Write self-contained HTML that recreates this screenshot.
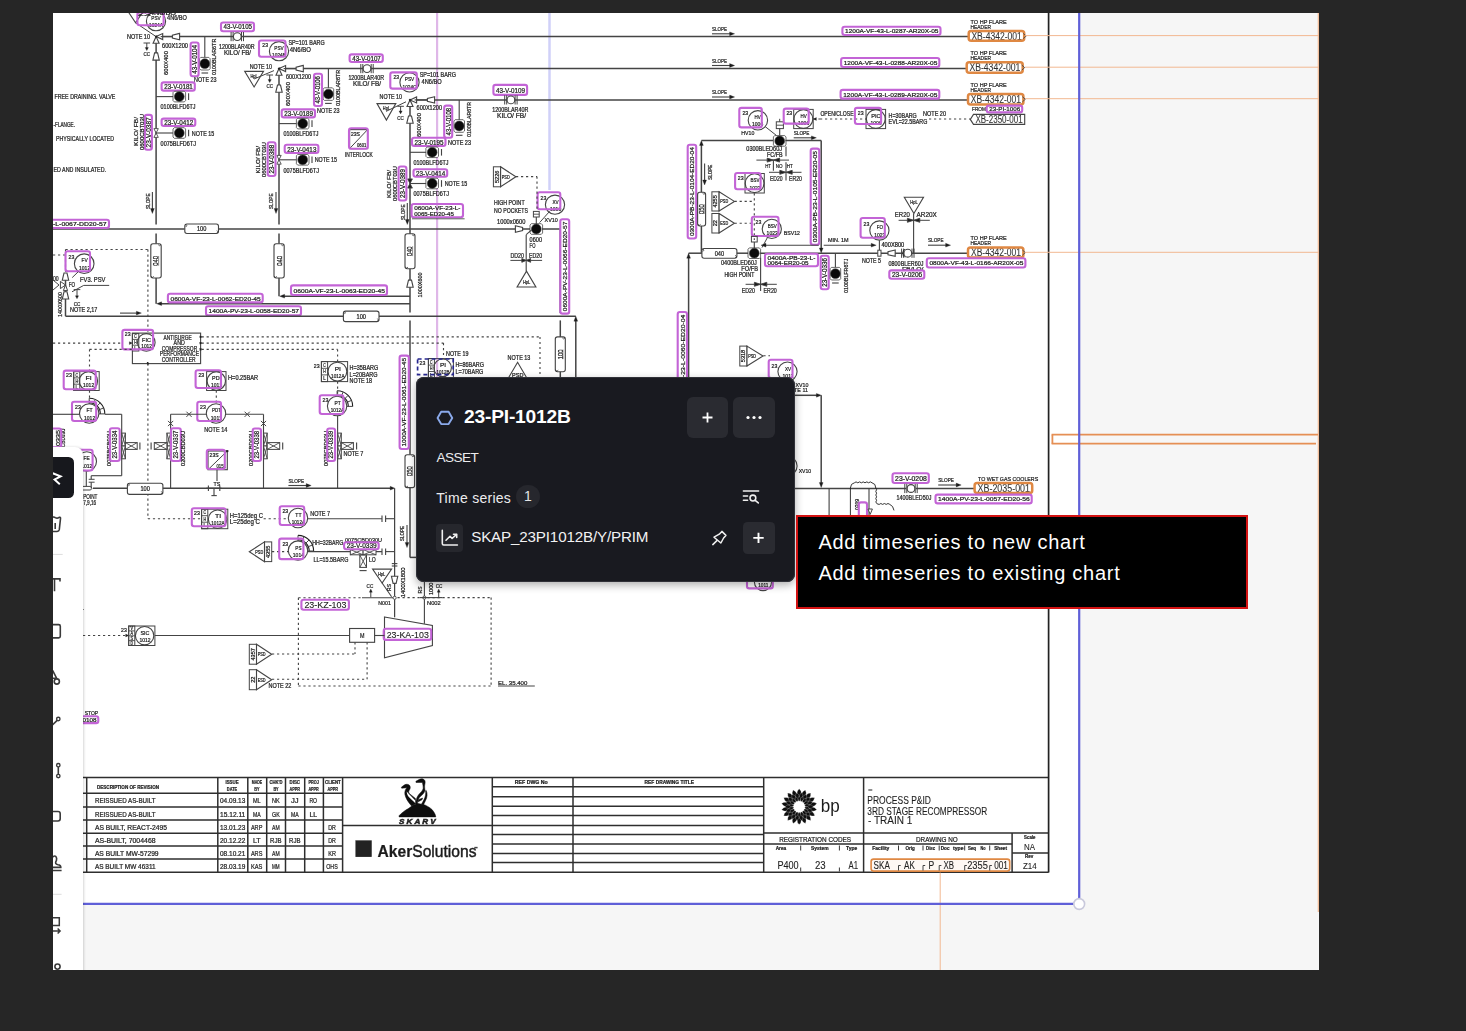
<!DOCTYPE html>
<html lang="en">
<head>
<meta charset="utf-8">
<title>P&amp;ID canvas – 23-PI-1012B</title>
<style>
html,body{margin:0;padding:0;}
body{width:1466px;height:1031px;background:#262626;overflow:hidden;position:relative;font-family:"Liberation Sans",sans-serif;}
#canvas{position:absolute;left:53px;top:13px;width:1266px;height:957px;background:#f6f6f6;overflow:hidden;}
#sheet{position:absolute;left:0;top:0;width:1026px;height:891px;background:#fff;}
#dia{position:absolute;left:-53px;top:-13px;width:1466px;height:1031px;filter:blur(.35px);}
#dia text{font-family:"Liberation Sans",sans-serif;stroke:#1e1e1e;stroke-width:.24px;}
#toolbar{position:absolute;left:0;top:433.8px;width:29.6px;height:530px;background:#fff;border-top-right-radius:8px;box-shadow:1px 0 2.5px rgba(0,0,0,.16);}
#toolsel{position:absolute;left:0;top:444px;width:20.8px;height:41px;background:#17181d;border-radius:0 5.5px 5.5px 0;}
#pop{position:absolute;left:416px;top:377px;width:378.5px;height:204.5px;box-sizing:border-box;background:#191a20;border-radius:8px;box-shadow:0 3px 9px rgba(0,0,0,.32),inset 0 0 0 1px #303138;color:#fff;}
#pop .ttl{position:absolute;left:48px;top:28.25px;font-size:19.2px;line-height:24px;font-weight:bold;letter-spacing:-0.19px;white-space:nowrap;}
#pop .btn{position:absolute;background:#2a2b31;border-radius:6px;}
#pop .asset{position:absolute;left:20.5px;top:72.6px;font-size:13.6px;line-height:16px;letter-spacing:-0.55px;color:#ececee;white-space:nowrap;}
#pop .ts{position:absolute;left:20.3px;top:111.6px;font-size:14px;line-height:18px;letter-spacing:0.27px;color:#ececee;white-space:nowrap;}
#pop .badge{position:absolute;left:100.3px;top:108.4px;width:23.4px;height:23px;border-radius:11.7px;background:#26272d;font-size:14px;line-height:23px;text-align:center;color:#e4e4e6;}
#pop .ico{position:absolute;left:20px;top:147px;width:27.3px;height:28px;border-radius:4px;background:#26272d;}
#pop .tsn{position:absolute;left:55.2px;top:150.1px;font-size:15.2px;line-height:20px;letter-spacing:-0.17px;color:#f2f2f3;white-space:nowrap;}
#menu{position:absolute;left:796px;top:515px;width:448px;height:90px;background:#000;border:2px solid #d31212;color:#fff;}
#menu div{position:absolute;left:20.4px;font-size:20px;line-height:24px;letter-spacing:0.76px;white-space:nowrap;}
</style>
</head>
<body>
<div id="canvas">
  <div id="sheet"></div>
  <svg id="dia" viewBox="0 0 1466 1031" width="1466" height="1031">
<line x1="437.1" y1="13" x2="437.1" y2="378" stroke="#dfb7e8" stroke-width="2.2"/>
<line x1="549.5" y1="13" x2="549.5" y2="190" stroke="#d0d1f8" stroke-width="2.5"/>
<line x1="156.1" y1="36.6" x2="968" y2="36.6" stroke="#444444" stroke-width="1.5"/>
<line x1="279" y1="68.6" x2="966" y2="68.6" stroke="#444444" stroke-width="1.5"/>
<line x1="410" y1="99.9" x2="967.3" y2="99.9" stroke="#444444" stroke-width="1.5"/>
<text x="712" y="30.9" font-size="6.14" textLength="15" lengthAdjust="spacingAndGlyphs" fill="#1e1e1e">SLOPE</text>
<line x1="712" y1="33.8" x2="731.6" y2="33.8" stroke="#444444" stroke-width="1.12"/>
<polygon points="734.6,33.8 729.6,31.9 729.6,35.7" fill="#1e1e1e" stroke="#1e1e1e" stroke-width="0.3" stroke-linejoin="miter"/>
<text x="712" y="62.9" font-size="6.14" textLength="15" lengthAdjust="spacingAndGlyphs" fill="#1e1e1e">SLOPE</text>
<line x1="712" y1="65.5" x2="731.6" y2="65.5" stroke="#444444" stroke-width="1.12"/>
<polygon points="734.6,65.5 729.6,63.6 729.6,67.4" fill="#1e1e1e" stroke="#1e1e1e" stroke-width="0.3" stroke-linejoin="miter"/>
<text x="712" y="94.2" font-size="6.14" textLength="15" lengthAdjust="spacingAndGlyphs" fill="#1e1e1e">SLOPE</text>
<line x1="712" y1="97" x2="731.6" y2="97" stroke="#444444" stroke-width="1.12"/>
<polygon points="734.6,97 729.6,95.1 729.6,98.9" fill="#1e1e1e" stroke="#1e1e1e" stroke-width="0.3" stroke-linejoin="miter"/>
<text x="845" y="33.3" font-size="6.14" textLength="93.5" lengthAdjust="spacingAndGlyphs" fill="#1e1e1e">1200A-VF-43-L-0287-AR20X-05</text>
<rect x="842.4" y="26.7" width="98.1" height="8.3" rx="2.2" fill="none" stroke="#c364d6" stroke-width="2.1"/>
<text x="843.7" y="64.9" font-size="6.14" textLength="93.6" lengthAdjust="spacingAndGlyphs" fill="#1e1e1e">1200A-VF-43-L-0288-AR20X-05</text>
<rect x="841.1" y="58" width="98.2" height="9" rx="2.2" fill="none" stroke="#c364d6" stroke-width="2.1"/>
<text x="843.2" y="96.7" font-size="6.14" textLength="94.1" lengthAdjust="spacingAndGlyphs" fill="#1e1e1e">1200A-VF-43-L-0289-AR20X-05</text>
<rect x="840.6" y="89.9" width="98.7" height="8.7" rx="2.2" fill="none" stroke="#c364d6" stroke-width="2.1"/>
<text x="970.5" y="23.9" font-size="6.14" textLength="36.2" lengthAdjust="spacingAndGlyphs" fill="#1e1e1e">TO  HP  FLARE</text>
<text x="970.5" y="29.2" font-size="6.14" textLength="20.5" lengthAdjust="spacingAndGlyphs" fill="#1e1e1e">HEADER</text>
<text x="971.4" y="39.8" font-size="10" textLength="50.4" lengthAdjust="spacingAndGlyphs" fill="#3a3a3a" style="stroke-width:.1px">XB-4342-001</text>
<rect x="968.7" y="31" width="55.5" height="9.7" rx="2.5" fill="#e8894a" fill-opacity="0.0" stroke="#df8843" stroke-width="2.5"/>
<polyline points="1023.2,33.4 1026.2,36 1023.2,38.6" fill="none" stroke="#444444" stroke-width="0.88" stroke-linejoin="miter"/>
<text x="970.5" y="55.4" font-size="6.14" textLength="36.2" lengthAdjust="spacingAndGlyphs" fill="#1e1e1e">TO  HP  FLARE</text>
<text x="970.5" y="60.4" font-size="6.14" textLength="20.5" lengthAdjust="spacingAndGlyphs" fill="#1e1e1e">HEADER</text>
<text x="969.4" y="71.4" font-size="10" textLength="50.9" lengthAdjust="spacingAndGlyphs" fill="#3a3a3a" style="stroke-width:.1px">XB-4342-001</text>
<rect x="966.7" y="62.3" width="56" height="10.4" rx="2.5" fill="#e8894a" fill-opacity="0.0" stroke="#df8843" stroke-width="2.5"/>
<polyline points="1021.7,65 1024.7,67.6 1021.7,70.2" fill="none" stroke="#444444" stroke-width="0.88" stroke-linejoin="miter"/>
<text x="970.5" y="87.1" font-size="6.14" textLength="36.2" lengthAdjust="spacingAndGlyphs" fill="#1e1e1e">TO  HP  FLARE</text>
<text x="970.5" y="92.1" font-size="6.14" textLength="20.5" lengthAdjust="spacingAndGlyphs" fill="#1e1e1e">HEADER</text>
<text x="970.7" y="103" font-size="10" textLength="50.3" lengthAdjust="spacingAndGlyphs" fill="#3a3a3a" style="stroke-width:.1px">XB-4342-001</text>
<rect x="968" y="93.9" width="55.4" height="10.5" rx="2.5" fill="#e8894a" fill-opacity="0.0" stroke="#df8843" stroke-width="2.5"/>
<polyline points="1022.4,96.7 1025.4,99.2 1022.4,101.8" fill="none" stroke="#444444" stroke-width="0.88" stroke-linejoin="miter"/>
<line x1="156.1" y1="36.6" x2="156.1" y2="224.4" stroke="#444444" stroke-width="1.5"/>
<line x1="156.1" y1="233.6" x2="156.1" y2="243.7" stroke="#444444" stroke-width="1.5"/>
<polyline points="122.4,3 135.6,22.8 148.8,3" fill="none" stroke="#444444" stroke-width="1.12" stroke-linejoin="miter"/>
<line x1="135.6" y1="22.8" x2="156.1" y2="36.6" stroke="#444444" stroke-width="1.0"/>
<circle cx="156" cy="21.2" r="9.6" fill="none" stroke="#444444" stroke-width="1.12"/>
<text x="151.3" y="20.2" font-size="6.14" textLength="9.4" lengthAdjust="spacingAndGlyphs" fill="#1e1e1e">PSV</text>
<text x="149" y="27.1" font-size="5.9" textLength="14" lengthAdjust="spacingAndGlyphs" fill="#1e1e1e">1024A</text>
<text x="137" y="16.4" font-size="5.9" textLength="14" lengthAdjust="spacingAndGlyphs" fill="#1e1e1e">23</text>
<rect x="137.4" y="12.4" width="26.2" height="12.8" rx="2.2" fill="none" stroke="#c364d6" stroke-width="2.1"/>
<text x="167" y="19.9" font-size="6.37" textLength="20" lengthAdjust="spacingAndGlyphs" fill="#1e1e1e">4N6/BO</text>
<text x="150" y="14.6" font-size="5.43" textLength="26" lengthAdjust="spacingAndGlyphs" fill="#1e1e1e">4N6/BO</text>
<text x="127" y="39" font-size="6.37" textLength="23" lengthAdjust="spacingAndGlyphs" fill="#1e1e1e">NOTE  10</text>
<polygon points="156.1,36.6 153.1,43.2 159.1,43.2" fill="#fff" stroke="#444444" stroke-width="1.12" stroke-linejoin="miter"/>
<polygon points="156.1,36.6 162.7,33.6 162.7,39.6" fill="#fff" stroke="#444444" stroke-width="1.12" stroke-linejoin="miter"/>
<circle cx="156.1" cy="36.6" r="0.9" fill="#1e1e1e" stroke="#1e1e1e" stroke-width="0.2"/>
<line x1="160.7" y1="36.6" x2="172.6" y2="36.6" stroke="#444444" stroke-width="1.12"/>
<polygon points="179.6,33.4 172.4,35.1 172.4,38.1 179.6,39.8" fill="#fff" stroke="#444444" stroke-width="1.12" stroke-linejoin="miter"/>
<line x1="143.5" y1="43" x2="150.1" y2="43" stroke="#444444" stroke-width="1.0"/>
<line x1="146.8" y1="43" x2="146.8" y2="48.6" stroke="#444444" stroke-width="1.0"/>
<polygon points="146.8,50.6 145.2,47.6 148.4,47.6" fill="#1e1e1e" stroke="#1e1e1e" stroke-width="0.3" stroke-linejoin="miter"/>
<text x="143.5" y="56.3" font-size="5.9" textLength="6.6" lengthAdjust="spacingAndGlyphs" fill="#1e1e1e">CC</text>
<polygon points="152.9,60.1 154.6,52.9 157.6,52.9 159.3,60.1" fill="#fff" stroke="#444444" stroke-width="1.12" stroke-linejoin="miter"/>
<text x="162" y="48" font-size="6.37" textLength="26" lengthAdjust="spacingAndGlyphs" fill="#1e1e1e">600X1200</text>
<text transform="translate(167.8 75) rotate(-90)" x="0" y="0" font-size="6.14" textLength="24" lengthAdjust="spacingAndGlyphs" fill="#1e1e1e">600X400</text>
<line x1="204.8" y1="36.6" x2="204.8" y2="57.6" stroke="#444444" stroke-width="1.12"/>
<polygon points="200.8,57.4 208.8,57.4 210.1,58.7 210.1,68.7 208.8,70 200.8,70 199.5,68.7 199.5,58.7" fill="#fff" stroke="#3a3a3a" stroke-width="0.75" stroke-linejoin="miter"/>
<circle cx="204.8" cy="63.7" r="4.9" fill="#0a0a0a" stroke="#444444" stroke-width="0.62"/>
<line x1="201.5" y1="73" x2="208.1" y2="73" stroke="#444444" stroke-width="1.12"/>
<text transform="translate(196.9 73.8) rotate(-90)" x="0" y="0" font-size="6.37" textLength="28.9" lengthAdjust="spacingAndGlyphs" fill="#1e1e1e">43-V-0104</text>
<rect x="190.6" y="42.5" width="8" height="33.7" rx="2.2" fill="none" stroke="#c364d6" stroke-width="2.1"/>
<text transform="translate(216 75) rotate(-90)" x="0" y="0" font-size="6.14" textLength="36.3" lengthAdjust="spacingAndGlyphs" fill="#1e1e1e">0100BLAR6TR</text>
<text x="194" y="82.3" font-size="6.37" textLength="22.5" lengthAdjust="spacingAndGlyphs" fill="#1e1e1e">NOTE  23</text>
<text x="223.6" y="29.4" font-size="6.61" textLength="28.4" lengthAdjust="spacingAndGlyphs" fill="#1e1e1e">43-V-0105</text>
<rect x="221" y="22.5" width="33" height="8.7" rx="2.2" fill="none" stroke="#c364d6" stroke-width="2.1"/>
<circle cx="237.3" cy="36.6" r="3.9" fill="#fff" stroke="#444444" stroke-width="1.12"/>
<line x1="231.1" y1="32" x2="231.1" y2="41.2" stroke="#444444" stroke-width="1.0"/>
<line x1="233.1" y1="32" x2="233.1" y2="41.2" stroke="#444444" stroke-width="1.0"/>
<line x1="241.5" y1="32" x2="241.5" y2="41.2" stroke="#444444" stroke-width="1.0"/>
<line x1="243.5" y1="32" x2="243.5" y2="41.2" stroke="#444444" stroke-width="1.0"/>
<text x="219" y="49" font-size="6.37" textLength="35.7" lengthAdjust="spacingAndGlyphs" fill="#1e1e1e">1200BLAR40R</text>
<text x="224" y="54.5" font-size="6.37" textLength="27" lengthAdjust="spacingAndGlyphs" fill="#1e1e1e">KILO/  FB/</text>
<text x="164.2" y="89.1" font-size="6.61" textLength="28.6" lengthAdjust="spacingAndGlyphs" fill="#1e1e1e">23-V-0181</text>
<rect x="161.6" y="82.4" width="33.2" height="8.2" rx="2.2" fill="none" stroke="#c364d6" stroke-width="2.1"/>
<line x1="156.1" y1="96.6" x2="173.4" y2="96.6" stroke="#444444" stroke-width="1.12"/>
<polygon points="173,92.6 174.3,91.3 184.3,91.3 185.6,92.6 185.6,100.6 184.3,101.9 174.3,101.9 173,100.6" fill="#fff" stroke="#3a3a3a" stroke-width="0.75" stroke-linejoin="miter"/>
<circle cx="179.3" cy="96.6" r="4.9" fill="#0a0a0a" stroke="#444444" stroke-width="0.62"/>
<line x1="188.6" y1="93.3" x2="188.6" y2="99.9" stroke="#444444" stroke-width="1.12"/>
<text x="160.6" y="109.2" font-size="6.37" textLength="35" lengthAdjust="spacingAndGlyphs" fill="#1e1e1e">0100BLFD6TJ</text>
<text x="164.2" y="124.9" font-size="6.61" textLength="29.1" lengthAdjust="spacingAndGlyphs" fill="#1e1e1e">23-V-0412</text>
<rect x="161.6" y="118.6" width="33.7" height="7.4" rx="2.2" fill="none" stroke="#c364d6" stroke-width="2.1"/>
<line x1="156.1" y1="133" x2="173.4" y2="133" stroke="#444444" stroke-width="1.12"/>
<polygon points="173,129 174.3,127.7 184.3,127.7 185.6,129 185.6,137 184.3,138.3 174.3,138.3 173,137" fill="#fff" stroke="#3a3a3a" stroke-width="0.75" stroke-linejoin="miter"/>
<circle cx="179.3" cy="133" r="4.9" fill="#0a0a0a" stroke="#444444" stroke-width="0.62"/>
<line x1="188.6" y1="129.7" x2="188.6" y2="136.3" stroke="#444444" stroke-width="1.12"/>
<text x="191.8" y="136.3" font-size="6.37" textLength="22.5" lengthAdjust="spacingAndGlyphs" fill="#1e1e1e">NOTE  15</text>
<text x="160.6" y="145.9" font-size="6.37" textLength="35.4" lengthAdjust="spacingAndGlyphs" fill="#1e1e1e">0075BLFD6TJ</text>
<polygon points="156.1,133 153.9,128.6 158.3,128.6" fill="#fff" stroke="#444444" stroke-width="0.88" stroke-linejoin="miter"/>
<polygon points="156.1,133 153.9,137.4 158.3,137.4" fill="#fff" stroke="#444444" stroke-width="0.88" stroke-linejoin="miter"/>
<text transform="translate(150.7 147.4) rotate(-90)" x="0" y="0" font-size="6.37" textLength="30.1" lengthAdjust="spacingAndGlyphs" fill="#1e1e1e">23-V-0387</text>
<rect x="144.9" y="114.9" width="7" height="34.9" rx="2.2" fill="none" stroke="#c364d6" stroke-width="2.1"/>
<text transform="translate(138.2 146) rotate(-90)" x="0" y="0" font-size="6.14" textLength="29" lengthAdjust="spacingAndGlyphs" fill="#1e1e1e">KILO/  FB/</text>
<text transform="translate(144 150) rotate(-90)" x="0" y="0" font-size="5.66" textLength="36" lengthAdjust="spacingAndGlyphs" fill="#1e1e1e">0600CBT03U</text>
<text transform="translate(150.1 209) rotate(-90)" x="0" y="0" font-size="6.14" textLength="15.5" lengthAdjust="spacingAndGlyphs" fill="#1e1e1e">SLOPE</text>
<line x1="152.4" y1="192" x2="152.4" y2="210.5" stroke="#444444" stroke-width="1.12"/>
<polygon points="152.4,213.5 150.5,208.5 154.3,208.5" fill="#1e1e1e" stroke="#1e1e1e" stroke-width="0.3" stroke-linejoin="miter"/>
<line x1="279" y1="68.6" x2="279" y2="224.4" stroke="#444444" stroke-width="1.5"/>
<line x1="279" y1="233.6" x2="279" y2="243.7" stroke="#444444" stroke-width="1.5"/>
<circle cx="279" cy="51.2" r="9.6" fill="none" stroke="#444444" stroke-width="1.12"/>
<text x="274.3" y="50.2" font-size="6.14" textLength="9.4" lengthAdjust="spacingAndGlyphs" fill="#1e1e1e">PSV</text>
<text x="272" y="57.3" font-size="5.9" textLength="14" lengthAdjust="spacingAndGlyphs" fill="#1e1e1e">1024B</text>
<text x="262.3" y="47.2" font-size="6.14" textLength="5.7" lengthAdjust="spacingAndGlyphs" fill="#1e1e1e">23</text>
<rect x="259" y="40.5" width="26.5" height="16.2" rx="2.2" fill="none" stroke="#c364d6" stroke-width="2.1"/>
<text x="288.4" y="45.3" font-size="6.37" textLength="36.3" lengthAdjust="spacingAndGlyphs" fill="#1e1e1e">SP=101  BARG</text>
<text x="289.7" y="51.6" font-size="6.37" textLength="21.3" lengthAdjust="spacingAndGlyphs" fill="#1e1e1e">4N6/BO</text>
<text x="249.7" y="69.3" font-size="6.37" textLength="22.3" lengthAdjust="spacingAndGlyphs" fill="#1e1e1e">NOTE  10</text>
<polygon points="279,68.6 276,75.2 282,75.2" fill="#fff" stroke="#444444" stroke-width="1.12" stroke-linejoin="miter"/>
<polygon points="279,68.6 285.6,65.6 285.6,71.6" fill="#fff" stroke="#444444" stroke-width="1.12" stroke-linejoin="miter"/>
<circle cx="279" cy="68.6" r="0.9" fill="#1e1e1e" stroke="#1e1e1e" stroke-width="0.2"/>
<line x1="283.6" y1="68.6" x2="296.4" y2="68.6" stroke="#444444" stroke-width="1.12"/>
<polygon points="303.3,65.4 296.1,67.1 296.1,70.1 303.3,71.8" fill="#fff" stroke="#444444" stroke-width="1.12" stroke-linejoin="miter"/>
<polygon points="244.7,71.4 263.5,71.4 254.1,87" fill="#fff" stroke="#444444" stroke-width="1.12" stroke-linejoin="miter"/>
<text x="250.5" y="77.9" font-size="5.19" textLength="7.3" lengthAdjust="spacingAndGlyphs" fill="#1e1e1e">HpL</text>
<line x1="254" y1="79" x2="274" y2="70.6" stroke="#444444" stroke-width="1.0"/>
<line x1="266.4" y1="75" x2="273" y2="75" stroke="#444444" stroke-width="1.0"/>
<line x1="269.7" y1="75" x2="269.7" y2="80.6" stroke="#444444" stroke-width="1.0"/>
<polygon points="269.7,82.6 268.1,79.6 271.3,79.6" fill="#1e1e1e" stroke="#1e1e1e" stroke-width="0.3" stroke-linejoin="miter"/>
<text x="266.4" y="88.3" font-size="5.9" textLength="6.6" lengthAdjust="spacingAndGlyphs" fill="#1e1e1e">CC</text>
<polygon points="275.8,92.2 277.5,85 280.5,85 282.2,92.2" fill="#fff" stroke="#444444" stroke-width="1.12" stroke-linejoin="miter"/>
<text x="286" y="79.3" font-size="6.37" textLength="25" lengthAdjust="spacingAndGlyphs" fill="#1e1e1e">600X1200</text>
<text transform="translate(290.2 106) rotate(-90)" x="0" y="0" font-size="6.14" textLength="24" lengthAdjust="spacingAndGlyphs" fill="#1e1e1e">600X400</text>
<line x1="328.4" y1="68.6" x2="328.4" y2="88" stroke="#444444" stroke-width="1.12"/>
<polygon points="324.4,87.8 332.4,87.8 333.7,89.1 333.7,99.1 332.4,100.4 324.4,100.4 323.1,99.1 323.1,89.1" fill="#fff" stroke="#3a3a3a" stroke-width="0.75" stroke-linejoin="miter"/>
<circle cx="328.4" cy="94.1" r="4.9" fill="#0a0a0a" stroke="#444444" stroke-width="0.62"/>
<line x1="325.1" y1="103.4" x2="331.7" y2="103.4" stroke="#444444" stroke-width="1.12"/>
<text transform="translate(320.3 103.6) rotate(-90)" x="0" y="0" font-size="6.37" textLength="27.5" lengthAdjust="spacingAndGlyphs" fill="#1e1e1e">43-V-0106</text>
<rect x="314" y="73.7" width="8" height="32.3" rx="2.2" fill="none" stroke="#c364d6" stroke-width="2.1"/>
<text transform="translate(339.6 106) rotate(-90)" x="0" y="0" font-size="6.14" textLength="36" lengthAdjust="spacingAndGlyphs" fill="#1e1e1e">0100BLAR6TR</text>
<text x="317" y="112.7" font-size="6.37" textLength="22.6" lengthAdjust="spacingAndGlyphs" fill="#1e1e1e">NOTE  23</text>
<text x="352.2" y="60.8" font-size="6.61" textLength="28.6" lengthAdjust="spacingAndGlyphs" fill="#1e1e1e">43-V-0107</text>
<rect x="349.6" y="54.4" width="33.2" height="7.6" rx="2.2" fill="none" stroke="#c364d6" stroke-width="2.1"/>
<circle cx="367" cy="68.6" r="3.9" fill="#fff" stroke="#444444" stroke-width="1.12"/>
<line x1="360.8" y1="64" x2="360.8" y2="73.2" stroke="#444444" stroke-width="1.0"/>
<line x1="362.8" y1="64" x2="362.8" y2="73.2" stroke="#444444" stroke-width="1.0"/>
<line x1="371.2" y1="64" x2="371.2" y2="73.2" stroke="#444444" stroke-width="1.0"/>
<line x1="373.2" y1="64" x2="373.2" y2="73.2" stroke="#444444" stroke-width="1.0"/>
<text x="348.4" y="80.3" font-size="6.37" textLength="35.6" lengthAdjust="spacingAndGlyphs" fill="#1e1e1e">1200BLAR40R</text>
<text x="353" y="86.3" font-size="6.37" textLength="28" lengthAdjust="spacingAndGlyphs" fill="#1e1e1e">KILO/  FB/</text>
<text x="284.3" y="116" font-size="6.61" textLength="28.7" lengthAdjust="spacingAndGlyphs" fill="#1e1e1e">23-V-0189</text>
<rect x="281.7" y="109.4" width="33.3" height="8" rx="2.2" fill="none" stroke="#c364d6" stroke-width="2.1"/>
<line x1="279" y1="123.6" x2="296.8" y2="123.6" stroke="#444444" stroke-width="1.12"/>
<polygon points="296.4,119.6 297.7,118.3 307.7,118.3 309,119.6 309,127.6 307.7,128.9 297.7,128.9 296.4,127.6" fill="#fff" stroke="#3a3a3a" stroke-width="0.75" stroke-linejoin="miter"/>
<circle cx="302.7" cy="123.6" r="4.9" fill="#0a0a0a" stroke="#444444" stroke-width="0.62"/>
<line x1="312" y1="120.3" x2="312" y2="126.9" stroke="#444444" stroke-width="1.12"/>
<text x="283.5" y="136.3" font-size="6.37" textLength="34.9" lengthAdjust="spacingAndGlyphs" fill="#1e1e1e">0100BLFD6TJ</text>
<text x="287.3" y="151.5" font-size="6.61" textLength="29.1" lengthAdjust="spacingAndGlyphs" fill="#1e1e1e">23-V-0413</text>
<rect x="284.7" y="144.8" width="33.7" height="8.2" rx="2.2" fill="none" stroke="#c364d6" stroke-width="2.1"/>
<line x1="279" y1="159.8" x2="296.8" y2="159.8" stroke="#444444" stroke-width="1.12"/>
<polygon points="296.4,155.8 297.7,154.5 307.7,154.5 309,155.8 309,163.8 307.7,165.1 297.7,165.1 296.4,163.8" fill="#fff" stroke="#3a3a3a" stroke-width="0.75" stroke-linejoin="miter"/>
<circle cx="302.7" cy="159.8" r="4.9" fill="#0a0a0a" stroke="#444444" stroke-width="0.62"/>
<line x1="312" y1="156.5" x2="312" y2="163.1" stroke="#444444" stroke-width="1.12"/>
<text x="314.7" y="162.1" font-size="6.37" textLength="22.3" lengthAdjust="spacingAndGlyphs" fill="#1e1e1e">NOTE  15</text>
<text x="283.5" y="172.6" font-size="6.37" textLength="35.5" lengthAdjust="spacingAndGlyphs" fill="#1e1e1e">0075BLFD6TJ</text>
<polygon points="279,159.8 276.8,155.4 281.2,155.4" fill="#fff" stroke="#444444" stroke-width="0.88" stroke-linejoin="miter"/>
<polygon points="279,159.8 276.8,164.2 281.2,164.2" fill="#fff" stroke="#444444" stroke-width="0.88" stroke-linejoin="miter"/>
<text transform="translate(273.9 173.6) rotate(-90)" x="0" y="0" font-size="6.37" textLength="28.9" lengthAdjust="spacingAndGlyphs" fill="#1e1e1e">23-V-0388</text>
<rect x="267.7" y="142.3" width="7.8" height="33.7" rx="2.2" fill="none" stroke="#c364d6" stroke-width="2.1"/>
<text transform="translate(259.6 173.5) rotate(-90)" x="0" y="0" font-size="6.14" textLength="27.5" lengthAdjust="spacingAndGlyphs" fill="#1e1e1e">KILO/  FB/</text>
<text transform="translate(266 177) rotate(-90)" x="0" y="0" font-size="5.66" textLength="35" lengthAdjust="spacingAndGlyphs" fill="#1e1e1e">0600CBT03U</text>
<text transform="translate(272.7 209) rotate(-90)" x="0" y="0" font-size="6.14" textLength="15.5" lengthAdjust="spacingAndGlyphs" fill="#1e1e1e">SLOPE</text>
<line x1="276" y1="192" x2="276" y2="210.5" stroke="#444444" stroke-width="1.12"/>
<polygon points="276,213.5 274.1,208.5 277.9,208.5" fill="#1e1e1e" stroke="#1e1e1e" stroke-width="0.3" stroke-linejoin="miter"/>
<rect x="349.6" y="129.6" width="18" height="19" fill="none" stroke="#444444" stroke-width="1.12"/>
<line x1="349.6" y1="148.6" x2="367.6" y2="129.6" stroke="#444444" stroke-width="1.0"/>
<text x="351" y="135.7" font-size="5.9" textLength="9" lengthAdjust="spacingAndGlyphs" fill="#1e1e1e">23S</text>
<text x="357" y="147.4" font-size="5.43" textLength="9.4" lengthAdjust="spacingAndGlyphs" fill="#1e1e1e">0601</text>
<rect x="349" y="128.2" width="18.8" height="20.6" rx="2.2" fill="none" stroke="#c364d6" stroke-width="2.1"/>
<text x="345" y="157.1" font-size="6.37" textLength="27.6" lengthAdjust="spacingAndGlyphs" fill="#1e1e1e">INTERLOCK</text>
<line x1="410" y1="99.9" x2="410" y2="234" stroke="#444444" stroke-width="1.5"/>
<line x1="410" y1="268.5" x2="410" y2="312.6" stroke="#444444" stroke-width="1.5"/>
<circle cx="409.5" cy="82.4" r="9.6" fill="none" stroke="#444444" stroke-width="1.12"/>
<text x="404.8" y="81.4" font-size="6.14" textLength="9.4" lengthAdjust="spacingAndGlyphs" fill="#1e1e1e">PSV</text>
<text x="402.5" y="88.5" font-size="5.9" textLength="14" lengthAdjust="spacingAndGlyphs" fill="#1e1e1e">1024C</text>
<text x="393.4" y="78.8" font-size="6.14" textLength="5.6" lengthAdjust="spacingAndGlyphs" fill="#1e1e1e">23</text>
<rect x="390.3" y="72.4" width="26.5" height="16.2" rx="2.2" fill="none" stroke="#c364d6" stroke-width="2.1"/>
<text x="419.7" y="76.7" font-size="6.37" textLength="36.3" lengthAdjust="spacingAndGlyphs" fill="#1e1e1e">SP=101  BARG</text>
<text x="421.5" y="83.5" font-size="6.37" textLength="20.2" lengthAdjust="spacingAndGlyphs" fill="#1e1e1e">4N6/BO</text>
<text x="379.6" y="98.9" font-size="6.37" textLength="22.4" lengthAdjust="spacingAndGlyphs" fill="#1e1e1e">NOTE  10</text>
<polygon points="410,99.9 407,106.5 413,106.5" fill="#fff" stroke="#444444" stroke-width="1.12" stroke-linejoin="miter"/>
<polygon points="410,99.9 416.6,96.9 416.6,102.9" fill="#fff" stroke="#444444" stroke-width="1.12" stroke-linejoin="miter"/>
<circle cx="410" cy="99.9" r="0.9" fill="#1e1e1e" stroke="#1e1e1e" stroke-width="0.2"/>
<line x1="414.6" y1="99.9" x2="427.6" y2="99.9" stroke="#444444" stroke-width="1.12"/>
<polygon points="434.6,96.7 427.4,98.4 427.4,101.4 434.6,103.1" fill="#fff" stroke="#444444" stroke-width="1.12" stroke-linejoin="miter"/>
<polygon points="377,103.6 395.8,103.6 386.4,120" fill="#fff" stroke="#444444" stroke-width="1.12" stroke-linejoin="miter"/>
<text x="382.8" y="110.4" font-size="5.19" textLength="7.3" lengthAdjust="spacingAndGlyphs" fill="#1e1e1e">HpL</text>
<line x1="386" y1="111.4" x2="406" y2="101.8" stroke="#444444" stroke-width="1.0"/>
<line x1="397.3" y1="106.3" x2="403.9" y2="106.3" stroke="#444444" stroke-width="1.0"/>
<line x1="400.6" y1="106.3" x2="400.6" y2="111.9" stroke="#444444" stroke-width="1.0"/>
<polygon points="400.6,113.9 399,110.9 402.2,110.9" fill="#1e1e1e" stroke="#1e1e1e" stroke-width="0.3" stroke-linejoin="miter"/>
<text x="397.3" y="119.6" font-size="5.9" textLength="6.6" lengthAdjust="spacingAndGlyphs" fill="#1e1e1e">CC</text>
<polygon points="406.8,123.2 408.5,116 411.5,116 413.2,123.2" fill="#fff" stroke="#444444" stroke-width="1.12" stroke-linejoin="miter"/>
<text x="416.6" y="110.3" font-size="6.37" textLength="25.4" lengthAdjust="spacingAndGlyphs" fill="#1e1e1e">600X1200</text>
<text transform="translate(420.8 137) rotate(-90)" x="0" y="0" font-size="6.14" textLength="24" lengthAdjust="spacingAndGlyphs" fill="#1e1e1e">600X400</text>
<line x1="459.2" y1="99.9" x2="459.2" y2="119.9" stroke="#444444" stroke-width="1.12"/>
<polygon points="455.2,119.7 463.2,119.7 464.5,121 464.5,131 463.2,132.3 455.2,132.3 453.9,131 453.9,121" fill="#fff" stroke="#3a3a3a" stroke-width="0.75" stroke-linejoin="miter"/>
<circle cx="459.2" cy="126" r="4.9" fill="#0a0a0a" stroke="#444444" stroke-width="0.62"/>
<line x1="455.9" y1="135.3" x2="462.5" y2="135.3" stroke="#444444" stroke-width="1.12"/>
<text transform="translate(450.5 135.4) rotate(-90)" x="0" y="0" font-size="6.37" textLength="27.4" lengthAdjust="spacingAndGlyphs" fill="#1e1e1e">43-V-0108</text>
<rect x="444.2" y="105.6" width="8" height="32.2" rx="2.2" fill="none" stroke="#c364d6" stroke-width="2.1"/>
<text transform="translate(470.8 137) rotate(-90)" x="0" y="0" font-size="6.14" textLength="35" lengthAdjust="spacingAndGlyphs" fill="#1e1e1e">0100BLAR6TR</text>
<text x="448" y="144.6" font-size="6.37" textLength="23" lengthAdjust="spacingAndGlyphs" fill="#1e1e1e">NOTE  23</text>
<text x="496" y="92.5" font-size="6.61" textLength="29.1" lengthAdjust="spacingAndGlyphs" fill="#1e1e1e">43-V-0109</text>
<rect x="493.4" y="84.9" width="33.7" height="10" rx="2.2" fill="none" stroke="#c364d6" stroke-width="2.1"/>
<circle cx="510.9" cy="99.9" r="3.9" fill="#fff" stroke="#444444" stroke-width="1.12"/>
<line x1="504.7" y1="95.3" x2="504.7" y2="104.5" stroke="#444444" stroke-width="1.0"/>
<line x1="506.7" y1="95.3" x2="506.7" y2="104.5" stroke="#444444" stroke-width="1.0"/>
<line x1="515.1" y1="95.3" x2="515.1" y2="104.5" stroke="#444444" stroke-width="1.0"/>
<line x1="517.1" y1="95.3" x2="517.1" y2="104.5" stroke="#444444" stroke-width="1.0"/>
<text x="492.2" y="111.7" font-size="6.37" textLength="36.2" lengthAdjust="spacingAndGlyphs" fill="#1e1e1e">1200BLAR40R</text>
<text x="497" y="117.7" font-size="6.37" textLength="29" lengthAdjust="spacingAndGlyphs" fill="#1e1e1e">KILO/  FB/</text>
<text x="414.6" y="144.5" font-size="6.61" textLength="28.9" lengthAdjust="spacingAndGlyphs" fill="#1e1e1e">23-V-0195</text>
<rect x="412" y="137.8" width="33.5" height="8.2" rx="2.2" fill="none" stroke="#c364d6" stroke-width="2.1"/>
<line x1="410" y1="152.3" x2="426.3" y2="152.3" stroke="#444444" stroke-width="1.12"/>
<polygon points="425.9,148.3 427.2,147 437.2,147 438.5,148.3 438.5,156.3 437.2,157.6 427.2,157.6 425.9,156.3" fill="#fff" stroke="#3a3a3a" stroke-width="0.75" stroke-linejoin="miter"/>
<circle cx="432.2" cy="152.3" r="4.9" fill="#0a0a0a" stroke="#444444" stroke-width="0.62"/>
<line x1="441.5" y1="149" x2="441.5" y2="155.6" stroke="#444444" stroke-width="1.12"/>
<text x="413.5" y="164.6" font-size="6.37" textLength="35" lengthAdjust="spacingAndGlyphs" fill="#1e1e1e">0100BLFD6TJ</text>
<text x="416.1" y="175.6" font-size="6.61" textLength="29.1" lengthAdjust="spacingAndGlyphs" fill="#1e1e1e">23-V-0414</text>
<rect x="413.5" y="169.3" width="33.7" height="7.5" rx="2.2" fill="none" stroke="#c364d6" stroke-width="2.1"/>
<line x1="410" y1="183.5" x2="426.3" y2="183.5" stroke="#444444" stroke-width="1.12"/>
<polygon points="425.9,179.5 427.2,178.2 437.2,178.2 438.5,179.5 438.5,187.5 437.2,188.8 427.2,188.8 425.9,187.5" fill="#fff" stroke="#3a3a3a" stroke-width="0.75" stroke-linejoin="miter"/>
<circle cx="432.2" cy="183.5" r="4.9" fill="#0a0a0a" stroke="#444444" stroke-width="0.62"/>
<line x1="441.5" y1="180.2" x2="441.5" y2="186.8" stroke="#444444" stroke-width="1.12"/>
<text x="444.7" y="185.8" font-size="6.37" textLength="22.5" lengthAdjust="spacingAndGlyphs" fill="#1e1e1e">NOTE  15</text>
<text x="413.5" y="196.3" font-size="6.37" textLength="35.5" lengthAdjust="spacingAndGlyphs" fill="#1e1e1e">0075BLFD6TJ</text>
<polygon points="410,183.5 407.6,178.9 412.4,178.9" fill="#1e1e1e" stroke="#444444" stroke-width="0.88" stroke-linejoin="miter"/>
<polygon points="410,183.5 407.6,188.1 412.4,188.1" fill="#1e1e1e" stroke="#444444" stroke-width="0.88" stroke-linejoin="miter"/>
<text transform="translate(404.8 198.1) rotate(-90)" x="0" y="0" font-size="6.37" textLength="29.2" lengthAdjust="spacingAndGlyphs" fill="#1e1e1e">23-V-0389</text>
<rect x="398.6" y="166.5" width="7.8" height="34" rx="2.2" fill="none" stroke="#c364d6" stroke-width="2.1"/>
<text transform="translate(390.8 198) rotate(-90)" x="0" y="0" font-size="6.14" textLength="28" lengthAdjust="spacingAndGlyphs" fill="#1e1e1e">KILO/  FB/</text>
<text transform="translate(397 201) rotate(-90)" x="0" y="0" font-size="5.66" textLength="35" lengthAdjust="spacingAndGlyphs" fill="#1e1e1e">0600CBT03U</text>
<text transform="translate(404.6 220) rotate(-90)" x="0" y="0" font-size="6.14" textLength="15.5" lengthAdjust="spacingAndGlyphs" fill="#1e1e1e">SLOPE</text>
<line x1="407.3" y1="203" x2="407.3" y2="221.5" stroke="#444444" stroke-width="1.12"/>
<polygon points="407.3,224.5 405.4,219.5 409.2,219.5" fill="#1e1e1e" stroke="#1e1e1e" stroke-width="0.3" stroke-linejoin="miter"/>
<text x="414.2" y="210.2" font-size="6.14" textLength="46.2" lengthAdjust="spacingAndGlyphs" fill="#1e1e1e">0600A-VF-23-L-</text>
<text x="414.2" y="216" font-size="6.14" textLength="39.6" lengthAdjust="spacingAndGlyphs" fill="#1e1e1e">0065-ED20-45</text>
<rect x="411.6" y="204" width="51.4" height="13.2" rx="2.2" fill="none" stroke="#c364d6" stroke-width="2.1"/>
<line x1="412" y1="218.8" x2="464.6" y2="218.8" stroke="#444444" stroke-width="0.88"/>
<text x="54.5" y="98.9" font-size="6.37" textLength="60.9" lengthAdjust="spacingAndGlyphs" fill="#1e1e1e">FREE  DRAINING.  VALVE</text>
<text x="53.5" y="126.7" font-size="6.37" textLength="21.5" lengthAdjust="spacingAndGlyphs" fill="#1e1e1e">-FLANGE.</text>
<text x="56" y="141.3" font-size="6.37" textLength="58" lengthAdjust="spacingAndGlyphs" fill="#1e1e1e">PHYSICALLY  LOCATED</text>
<text x="53.5" y="172.1" font-size="6.37" textLength="52.5" lengthAdjust="spacingAndGlyphs" fill="#1e1e1e">ED  AND  INSULATED.</text>
<line x1="53" y1="229" x2="184.8" y2="229" stroke="#444444" stroke-width="1.5"/>
<line x1="218.5" y1="229" x2="515.9" y2="229" stroke="#444444" stroke-width="1.5"/>
<text x="53" y="226.3" font-size="6.14" textLength="53.6" lengthAdjust="spacingAndGlyphs" fill="#1e1e1e">-L-0067-DD20-57</text>
<rect x="50" y="219.7" width="59" height="8.3" rx="2.2" fill="none" stroke="#c364d6" stroke-width="2.1"/>
<rect x="184.8" y="224" width="33.7" height="9.5" fill="#fff" stroke="#444444" stroke-width="1.12" rx="2.2"/>
<path d="M185.8 224.4 q2 1.2 0 2.6 M216.9 233.1 q2 -1.2 0 -2.6" fill="none" stroke="#1e1e1e" stroke-width="0.7"/>
<text x="196.9" y="231.1" font-size="6.61" textLength="9.4" lengthAdjust="spacingAndGlyphs" fill="#1e1e1e">100</text>
<polygon points="515.4,225.8 522.6,227.5 522.6,230.5 515.4,232.2" fill="#fff" stroke="#444444" stroke-width="1.12" stroke-linejoin="miter"/>
<line x1="522.2" y1="229" x2="530.6" y2="229" stroke="#444444" stroke-width="1.5"/>
<polygon points="530,225 531.3,223.7 541.3,223.7 542.6,225 542.6,233 541.3,234.3 531.3,234.3 530,233" fill="#fff" stroke="#3a3a3a" stroke-width="0.75" stroke-linejoin="miter"/>
<circle cx="536.3" cy="229" r="4.9" fill="#0a0a0a" stroke="#444444" stroke-width="0.62"/>
<line x1="536.3" y1="217" x2="536.3" y2="224" stroke="#444444" stroke-width="1.12"/>
<rect x="533.4" y="211.4" width="5.8" height="5.6" fill="none" stroke="#444444" stroke-width="1.0"/>
<line x1="533.4" y1="214.2" x2="539.2" y2="214.2" stroke="#444444" stroke-width="0.88"/>
<line x1="539.6" y1="222.6" x2="549.6" y2="211.4" stroke="#444444" stroke-width="1.0"/>
<circle cx="555" cy="204.7" r="9.6" fill="none" stroke="#444444" stroke-width="1.12"/>
<text x="552.5" y="203.6" font-size="6.14" textLength="6.2" lengthAdjust="spacingAndGlyphs" fill="#1e1e1e">XV</text>
<text x="550" y="210.9" font-size="5.9" textLength="11.2" lengthAdjust="spacingAndGlyphs" fill="#1e1e1e">1010</text>
<text x="540.6" y="199.5" font-size="6.14" textLength="5.8" lengthAdjust="spacingAndGlyphs" fill="#1e1e1e">23</text>
<rect x="537.6" y="192.3" width="22.7" height="16.9" rx="2.2" fill="none" stroke="#c364d6" stroke-width="2.1"/>
<text x="544.6" y="221.9" font-size="6.14" textLength="13.2" lengthAdjust="spacingAndGlyphs" fill="#1e1e1e">XV10</text>
<text x="494" y="205.3" font-size="6.37" textLength="30.6" lengthAdjust="spacingAndGlyphs" fill="#1e1e1e">HIGH  POINT</text>
<text x="494" y="213.3" font-size="6.37" textLength="33.9" lengthAdjust="spacingAndGlyphs" fill="#1e1e1e">NO  POCKETS</text>
<text x="497" y="224" font-size="6.37" textLength="28.4" lengthAdjust="spacingAndGlyphs" fill="#1e1e1e">1000x0600</text>
<text x="529.6" y="241.5" font-size="6.37" textLength="12.4" lengthAdjust="spacingAndGlyphs" fill="#1e1e1e">0600</text>
<text x="529.6" y="248.3" font-size="6.37" textLength="5.8" lengthAdjust="spacingAndGlyphs" fill="#1e1e1e">FO</text>
<line x1="542" y1="229" x2="560.3" y2="229" stroke="#444444" stroke-width="1.5"/>
<line x1="560.3" y1="229" x2="560.3" y2="313" stroke="#444444" stroke-width="1.5"/>
<text transform="translate(567 311.2) rotate(-90)" x="0" y="0" font-size="6.14" textLength="89.6" lengthAdjust="spacingAndGlyphs" fill="#1e1e1e">0600A-PV-23-L-0066-ED20-57</text>
<rect x="560.3" y="219.2" width="8.9" height="94.4" rx="2.2" fill="none" stroke="#c364d6" stroke-width="2.1"/>
<line x1="526.2" y1="234.7" x2="526.2" y2="271.2" stroke="#444444" stroke-width="1.12"/>
<line x1="526.2" y1="234.7" x2="531.6" y2="229.8" stroke="#444444" stroke-width="1.12"/>
<text x="510.4" y="258.2" font-size="6.37" textLength="13.5" lengthAdjust="spacingAndGlyphs" fill="#1e1e1e">DD20</text>
<text x="528.9" y="258.2" font-size="6.37" textLength="13.2" lengthAdjust="spacingAndGlyphs" fill="#1e1e1e">ED20</text>
<line x1="510.4" y1="260.4" x2="542.1" y2="260.4" stroke="#444444" stroke-width="1.0"/>
<polygon points="526.2,260.4 521.8,258.5 521.8,262.3" fill="#1e1e1e" stroke="#444444" stroke-width="0.88" stroke-linejoin="miter"/>
<polygon points="526.2,260.4 530.6,258.5 530.6,262.3" fill="#1e1e1e" stroke="#444444" stroke-width="0.88" stroke-linejoin="miter"/>
<polygon points="517.1,287 535.9,287 526.5,271.2" fill="#fff" stroke="#444444" stroke-width="1.12" stroke-linejoin="miter"/>
<text x="522.9" y="284.4" font-size="5.19" textLength="7.3" lengthAdjust="spacingAndGlyphs" fill="#1e1e1e">HpL</text>
<rect x="493.4" y="166.8" width="7.2" height="20" fill="#fff" stroke="#444444" stroke-width="1.0"/>
<polygon points="500.6,166.8 515.9,176.8 500.6,186.8" fill="#fff" stroke="#444444" stroke-width="1.12" stroke-linejoin="miter"/>
<text transform="translate(498.9 183) rotate(-90)" x="0" y="0" font-size="5.19" textLength="12.4" lengthAdjust="spacingAndGlyphs" fill="#1e1e1e">5226</text>
<text x="501.8" y="178.7" font-size="5.19" textLength="7.9" lengthAdjust="spacingAndGlyphs" fill="#1e1e1e">PSD</text>
<line x1="516" y1="176.6" x2="537" y2="176.6" stroke="#444444" stroke-width="1.12" stroke-dasharray="2.2 2.8"/>
<line x1="537" y1="176.6" x2="537" y2="211" stroke="#444444" stroke-width="1.12" stroke-dasharray="2.2 2.8"/>
<line x1="701.4" y1="144.6" x2="701.4" y2="253.2" stroke="#444444" stroke-width="1.5"/>
<polygon points="701.4,140.4 699.5,145.4 703.3,145.4" fill="#1e1e1e" stroke="#1e1e1e" stroke-width="0.3" stroke-linejoin="miter"/>
<line x1="701.4" y1="140.6" x2="773.6" y2="140.6" stroke="#444444" stroke-width="1.5"/>
<text transform="translate(694.2 236.1) rotate(-90)" x="0" y="0" font-size="6.14" textLength="88.9" lengthAdjust="spacingAndGlyphs" fill="#1e1e1e">0300A-PB-23-L-0104-ED20-04</text>
<rect x="687.7" y="144.8" width="8.5" height="93.7" rx="2.2" fill="none" stroke="#c364d6" stroke-width="2.1"/>
<text transform="translate(711.8 179.8) rotate(-90)" x="0" y="0" font-size="6.14" textLength="15" lengthAdjust="spacingAndGlyphs" fill="#1e1e1e">SLOPE</text>
<line x1="704.6" y1="163.6" x2="704.6" y2="182" stroke="#444444" stroke-width="1.12"/>
<polygon points="704.6,185 702.7,180 706.5,180" fill="#1e1e1e" stroke="#1e1e1e" stroke-width="0.3" stroke-linejoin="miter"/>
<rect x="697.6" y="192.3" width="8" height="33.7" fill="#fff" stroke="#444444" stroke-width="1.12" rx="2.2"/>
<path d="M698 224.4 q1.2 2 2.6 0 M705.2 193.3 q-1.2 2 -2.6 0" fill="none" stroke="#1e1e1e" stroke-width="0.7"/>
<text transform="translate(704 214) rotate(-90)" x="0" y="0" font-size="6.61" textLength="9.7" lengthAdjust="spacingAndGlyphs" fill="#1e1e1e">050</text>
<line x1="704.2" y1="204.3" x2="704.2" y2="214" stroke="#444444" stroke-width="0.62"/>
<circle cx="757.9" cy="120.3" r="9.7" fill="none" stroke="#444444" stroke-width="1.12"/>
<text x="754.5" y="118.8" font-size="6.14" textLength="6.2" lengthAdjust="spacingAndGlyphs" fill="#1e1e1e">HV</text>
<text x="752" y="126.1" font-size="5.9" textLength="11.2" lengthAdjust="spacingAndGlyphs" fill="#1e1e1e">1006</text>
<text x="742.4" y="115" font-size="6.14" textLength="5.8" lengthAdjust="spacingAndGlyphs" fill="#1e1e1e">23</text>
<rect x="739.3" y="107.9" width="22.5" height="19.5" rx="2.2" fill="none" stroke="#c364d6" stroke-width="2.1"/>
<text x="741.3" y="135.2" font-size="6.14" textLength="13" lengthAdjust="spacingAndGlyphs" fill="#1e1e1e">HV10</text>
<line x1="765.2" y1="126.6" x2="776.6" y2="135.6" stroke="#444444" stroke-width="1.0"/>
<polygon points="773.4,136.9 774.7,135.6 784.7,135.6 786,136.9 786,144.9 784.7,146.2 774.7,146.2 773.4,144.9" fill="#fff" stroke="#3a3a3a" stroke-width="0.75" stroke-linejoin="miter"/>
<circle cx="779.7" cy="140.9" r="4.9" fill="#0a0a0a" stroke="#444444" stroke-width="0.62"/>
<line x1="779.7" y1="128.6" x2="779.7" y2="135.4" stroke="#444444" stroke-width="1.12"/>
<rect x="776.3" y="121.8" width="7.1" height="6.8" fill="none" stroke="#444444" stroke-width="1.0"/>
<line x1="776.3" y1="125.2" x2="783.4" y2="125.2" stroke="#444444" stroke-width="0.88"/>
<line x1="779.7" y1="118.8" x2="779.7" y2="121.8" stroke="#444444" stroke-width="1.0"/>
<text x="746.3" y="151.1" font-size="6.37" textLength="35.7" lengthAdjust="spacingAndGlyphs" fill="#1e1e1e">0300BLED60J</text>
<rect x="793.7" y="109.4" width="19.5" height="19.2" fill="none" stroke="#444444" stroke-width="1.0"/>
<circle cx="803.4" cy="119" r="9.4" fill="none" stroke="#444444" stroke-width="1.12"/>
<text x="800.5" y="118" font-size="6.14" textLength="6.2" lengthAdjust="spacingAndGlyphs" fill="#1e1e1e">HV</text>
<text x="798" y="125.1" font-size="5.9" textLength="11.2" lengthAdjust="spacingAndGlyphs" fill="#1e1e1e">1006</text>
<text x="786.4" y="115.2" font-size="6.14" textLength="5.8" lengthAdjust="spacingAndGlyphs" fill="#1e1e1e">23</text>
<rect x="783.7" y="108.6" width="25" height="15" rx="2.2" fill="none" stroke="#c364d6" stroke-width="2.1"/>
<line x1="813.4" y1="119" x2="820" y2="119" stroke="#444444" stroke-width="1.12" stroke-dasharray="2.2 2.8"/>
<polygon points="813.4,119 816.4,117.6 816.4,120.4" fill="#1e1e1e" stroke="#1e1e1e" stroke-width="0.3" stroke-linejoin="miter"/>
<text x="820.4" y="115.9" font-size="6.37" textLength="33.2" lengthAdjust="spacingAndGlyphs" fill="#1e1e1e">OPEN/CLOSE</text>
<line x1="820" y1="119" x2="866" y2="119" stroke="#444444" stroke-width="1.12" stroke-dasharray="2.2 2.8"/>
<rect x="866" y="109.4" width="19.6" height="19.2" fill="none" stroke="#444444" stroke-width="1.0"/>
<circle cx="875.8" cy="119" r="9.4" fill="none" stroke="#444444" stroke-width="1.12"/>
<text x="871.3" y="118" font-size="6.14" textLength="9.4" lengthAdjust="spacingAndGlyphs" fill="#1e1e1e">PIC</text>
<text x="870.4" y="125.1" font-size="5.9" textLength="11.2" lengthAdjust="spacingAndGlyphs" fill="#1e1e1e">1006</text>
<text x="857.8" y="115" font-size="6.14" textLength="5.8" lengthAdjust="spacingAndGlyphs" fill="#1e1e1e">23</text>
<rect x="854.9" y="107.9" width="26.2" height="16.1" rx="2.2" fill="none" stroke="#c364d6" stroke-width="2.1"/>
<text x="888.6" y="117.7" font-size="6.37" textLength="28.2" lengthAdjust="spacingAndGlyphs" fill="#1e1e1e">H=30BARG</text>
<text x="888.6" y="123.9" font-size="6.37" textLength="38.7" lengthAdjust="spacingAndGlyphs" fill="#1e1e1e">EVL=22.5BARG</text>
<text x="923" y="115.9" font-size="6.37" textLength="23" lengthAdjust="spacingAndGlyphs" fill="#1e1e1e">NOTE  20</text>
<line x1="929" y1="119" x2="970.5" y2="119" stroke="#444444" stroke-width="1.12" stroke-dasharray="2.2 2.8"/>
<text x="972" y="111.2" font-size="6.14" textLength="14" lengthAdjust="spacingAndGlyphs" fill="#1e1e1e">FROM</text>
<text x="989.3" y="111.4" font-size="6.14" textLength="30.9" lengthAdjust="spacingAndGlyphs" fill="#1e1e1e">23-PI-1006</text>
<rect x="986.7" y="105.6" width="35.5" height="6.8" rx="2.2" fill="none" stroke="#c364d6" stroke-width="2.1"/>
<polygon points="973.5,114.4 1024.7,114.4 1024.7,124.4 973.5,124.4 970.3,119.4" fill="#fff" stroke="#444444" stroke-width="1.12" stroke-linejoin="miter"/>
<text x="975.4" y="123.2" font-size="10" textLength="47.2" lengthAdjust="spacingAndGlyphs" fill="#3a3a3a" style="stroke-width:.1px">XB-2350-001</text>
<text x="793.7" y="134.5" font-size="6.14" textLength="15.7" lengthAdjust="spacingAndGlyphs" fill="#1e1e1e">SLOPE</text>
<line x1="793.7" y1="137.8" x2="813.4" y2="137.8" stroke="#444444" stroke-width="1.12"/>
<polygon points="816.4,137.8 811.4,135.9 811.4,139.7" fill="#1e1e1e" stroke="#1e1e1e" stroke-width="0.3" stroke-linejoin="miter"/>
<line x1="785.4" y1="140.6" x2="821.2" y2="140.6" stroke="#444444" stroke-width="1.5"/>
<line x1="821.2" y1="140.6" x2="821.2" y2="249.4" stroke="#444444" stroke-width="1.5"/>
<polygon points="821.2,253 819.3,248 823.1,248" fill="#1e1e1e" stroke="#1e1e1e" stroke-width="0.3" stroke-linejoin="miter"/>
<text transform="translate(817.2 242.3) rotate(-90)" x="0" y="0" font-size="6.14" textLength="91.3" lengthAdjust="spacingAndGlyphs" fill="#1e1e1e">0300A-PB-23-L-0105-ER20-05</text>
<rect x="810.7" y="148.6" width="8.5" height="96.1" rx="2.2" fill="none" stroke="#c364d6" stroke-width="2.1"/>
<text x="767" y="157.1" font-size="6.37" textLength="15.6" lengthAdjust="spacingAndGlyphs" fill="#1e1e1e">FC/FB</text>
<line x1="756.4" y1="160.1" x2="789" y2="160.1" stroke="#444444" stroke-width="1.0"/>
<polygon points="773.4,160.1 767.2,158.1 767.2,162.1" fill="#1e1e1e" stroke="#444444" stroke-width="0.88" stroke-linejoin="miter"/>
<polygon points="773.4,160.1 779.6,158.1 779.6,162.1" fill="#1e1e1e" stroke="#444444" stroke-width="0.88" stroke-linejoin="miter"/>
<line x1="773.4" y1="160.1" x2="773.4" y2="170.8" stroke="#444444" stroke-width="1.12"/>
<line x1="786" y1="146.6" x2="786" y2="156.3" stroke="#444444" stroke-width="1.12"/>
<line x1="786" y1="162.2" x2="786" y2="180.5" stroke="#444444" stroke-width="1.12"/>
<text x="765.2" y="167.5" font-size="6.14" textLength="5.8" lengthAdjust="spacingAndGlyphs" fill="#1e1e1e">HT</text>
<text x="775.8" y="167.5" font-size="6.14" textLength="6.8" lengthAdjust="spacingAndGlyphs" fill="#1e1e1e">NO</text>
<text x="786.8" y="167.5" font-size="6.14" textLength="6" lengthAdjust="spacingAndGlyphs" fill="#1e1e1e">HT</text>
<line x1="769" y1="172.3" x2="801.5" y2="172.3" stroke="#444444" stroke-width="1.0"/>
<polygon points="786,172.3 779.8,170.3 779.8,174.3" fill="#1e1e1e" stroke="#444444" stroke-width="0.88" stroke-linejoin="miter"/>
<polygon points="786,172.3 792.2,170.3 792.2,174.3" fill="#1e1e1e" stroke="#444444" stroke-width="0.88" stroke-linejoin="miter"/>
<text x="770" y="181" font-size="6.37" textLength="12.6" lengthAdjust="spacingAndGlyphs" fill="#1e1e1e">ED20</text>
<text x="789" y="181" font-size="6.37" textLength="13" lengthAdjust="spacingAndGlyphs" fill="#1e1e1e">ER20</text>
<rect x="745" y="173.5" width="19.3" height="19.5" fill="none" stroke="#444444" stroke-width="1.0"/>
<circle cx="754.6" cy="183.2" r="9.4" fill="none" stroke="#444444" stroke-width="1.12"/>
<text x="750.5" y="182.1" font-size="5.9" textLength="9" lengthAdjust="spacingAndGlyphs" fill="#1e1e1e">BSV</text>
<text x="749.4" y="189.5" font-size="5.9" textLength="11.2" lengthAdjust="spacingAndGlyphs" fill="#1e1e1e">1022</text>
<text x="737.8" y="179.8" font-size="6.14" textLength="5.8" lengthAdjust="spacingAndGlyphs" fill="#1e1e1e">23</text>
<rect x="735.1" y="173" width="25.5" height="16.3" rx="2.2" fill="none" stroke="#c364d6" stroke-width="2.1"/>
<rect x="711.9" y="191.8" width="7.2" height="19.2" fill="#fff" stroke="#444444" stroke-width="1.0"/>
<polygon points="719.1,191.8 734.4,201.4 719.1,211" fill="#fff" stroke="#444444" stroke-width="1.12" stroke-linejoin="miter"/>
<text transform="translate(717.4 207.6) rotate(-90)" x="0" y="0" font-size="5.19" textLength="12.4" lengthAdjust="spacingAndGlyphs" fill="#1e1e1e">4255</text>
<text x="720.3" y="203.3" font-size="5.19" textLength="7.9" lengthAdjust="spacingAndGlyphs" fill="#1e1e1e">PSD</text>
<line x1="734.6" y1="201.4" x2="754.3" y2="201.4" stroke="#444444" stroke-width="1.12" stroke-dasharray="2.2 2.8"/>
<rect x="711.9" y="213.5" width="7.2" height="19.5" fill="#fff" stroke="#444444" stroke-width="1.0"/>
<polygon points="719.1,213.5 734.4,223.2 719.1,233" fill="#fff" stroke="#444444" stroke-width="1.12" stroke-linejoin="miter"/>
<text transform="translate(717.4 226.3) rotate(-90)" x="0" y="0" font-size="5.19" textLength="6.2" lengthAdjust="spacingAndGlyphs" fill="#1e1e1e">22</text>
<text x="720.3" y="225.1" font-size="5.19" textLength="7.9" lengthAdjust="spacingAndGlyphs" fill="#1e1e1e">ESD</text>
<line x1="734.6" y1="223.2" x2="754.3" y2="223.2" stroke="#444444" stroke-width="1.12" stroke-dasharray="2.2 2.8"/>
<line x1="754.3" y1="193.2" x2="754.3" y2="240" stroke="#444444" stroke-width="1.12" stroke-dasharray="2.2 2.8"/>
<circle cx="771.8" cy="228.9" r="9.6" fill="none" stroke="#444444" stroke-width="1.12"/>
<text x="767.7" y="227.7" font-size="5.9" textLength="9" lengthAdjust="spacingAndGlyphs" fill="#1e1e1e">BSV</text>
<text x="766.6" y="235.1" font-size="5.9" textLength="11.2" lengthAdjust="spacingAndGlyphs" fill="#1e1e1e">1023</text>
<text x="755.6" y="223.8" font-size="6.14" textLength="5.8" lengthAdjust="spacingAndGlyphs" fill="#1e1e1e">23</text>
<rect x="751.8" y="216.7" width="26.7" height="19.3" rx="2.2" fill="none" stroke="#c364d6" stroke-width="2.1"/>
<text x="783.7" y="234.9" font-size="6.14" textLength="16.3" lengthAdjust="spacingAndGlyphs" fill="#1e1e1e">BSV12</text>
<rect x="751.4" y="236.4" width="5.8" height="5.6" fill="none" stroke="#444444" stroke-width="1.0"/>
<line x1="754.3" y1="242" x2="754.3" y2="248.4" stroke="#444444" stroke-width="1.12"/>
<line x1="762" y1="247.6" x2="767.4" y2="237.6" stroke="#444444" stroke-width="1.0"/>
<line x1="688.6" y1="253.2" x2="701.9" y2="253.2" stroke="#444444" stroke-width="1.5"/>
<rect x="701.9" y="248.5" width="35" height="9.7" fill="#fff" stroke="#444444" stroke-width="1.12" rx="2.2"/>
<path d="M702.9 248.9 q2 1.2 0 2.6 M735.3 257.8 q2 -1.2 0 -2.6" fill="none" stroke="#1e1e1e" stroke-width="0.7"/>
<text x="714.7" y="255.7" font-size="6.61" textLength="9.4" lengthAdjust="spacingAndGlyphs" fill="#1e1e1e">040</text>
<line x1="736.9" y1="253.2" x2="748.6" y2="253.2" stroke="#444444" stroke-width="1.5"/>
<polygon points="748,249.2 749.3,247.9 759.3,247.9 760.6,249.2 760.6,257.2 759.3,258.5 749.3,258.5 748,257.2" fill="#fff" stroke="#3a3a3a" stroke-width="0.75" stroke-linejoin="miter"/>
<circle cx="754.3" cy="253.2" r="4.9" fill="#0a0a0a" stroke="#444444" stroke-width="0.62"/>
<line x1="760.2" y1="253.2" x2="968" y2="253.2" stroke="#444444" stroke-width="1.5"/>
<line x1="688.6" y1="257" x2="688.6" y2="378" stroke="#444444" stroke-width="1.5"/>
<polygon points="688.6,253.2 686.7,258.2 690.5,258.2" fill="#1e1e1e" stroke="#1e1e1e" stroke-width="0.3" stroke-linejoin="miter"/>
<text x="721" y="264.7" font-size="6.37" textLength="35.8" lengthAdjust="spacingAndGlyphs" fill="#1e1e1e">0400BLED60J</text>
<text x="741.3" y="271" font-size="6.37" textLength="16.7" lengthAdjust="spacingAndGlyphs" fill="#1e1e1e">FO/FB</text>
<text x="724.4" y="277.3" font-size="6.37" textLength="29.9" lengthAdjust="spacingAndGlyphs" fill="#1e1e1e">HIGH  POINT</text>
<line x1="760.6" y1="257.6" x2="760.6" y2="291" stroke="#444444" stroke-width="1.12"/>
<line x1="745.6" y1="284.3" x2="776.8" y2="284.3" stroke="#444444" stroke-width="1.0"/>
<polygon points="760.6,284.3 754.4,282.3 754.4,286.3" fill="#1e1e1e" stroke="#444444" stroke-width="0.88" stroke-linejoin="miter"/>
<polygon points="760.6,284.3 766.8,282.3 766.8,286.3" fill="#1e1e1e" stroke="#444444" stroke-width="0.88" stroke-linejoin="miter"/>
<text x="741.8" y="293.2" font-size="6.37" textLength="13.2" lengthAdjust="spacingAndGlyphs" fill="#1e1e1e">ED20</text>
<text x="763.6" y="293.2" font-size="6.37" textLength="13.2" lengthAdjust="spacingAndGlyphs" fill="#1e1e1e">ER20</text>
<line x1="764" y1="245.2" x2="818.7" y2="245.2" stroke="#444444" stroke-width="1.12"/>
<polygon points="761,245.2 766,243.3 766,247.1" fill="#1e1e1e" stroke="#1e1e1e" stroke-width="0.3" stroke-linejoin="miter"/>
<text x="767.6" y="259.7" font-size="6.14" textLength="47.8" lengthAdjust="spacingAndGlyphs" fill="#1e1e1e">0400A-PB-23-L-</text>
<text x="767.6" y="265.2" font-size="6.14" textLength="41" lengthAdjust="spacingAndGlyphs" fill="#1e1e1e">0064-ER20-05</text>
<rect x="765" y="253.7" width="53" height="12.5" rx="2.2" fill="none" stroke="#c364d6" stroke-width="2.1"/>
<text transform="translate(827 286.8) rotate(-90)" x="0" y="0" font-size="6.37" textLength="28.7" lengthAdjust="spacingAndGlyphs" fill="#1e1e1e">23-V-0336</text>
<rect x="820.7" y="255.7" width="8" height="33.5" rx="2.2" fill="none" stroke="#c364d6" stroke-width="2.1"/>
<line x1="835.4" y1="253.2" x2="835.4" y2="267.6" stroke="#444444" stroke-width="1.12"/>
<polygon points="831.4,267.4 839.4,267.4 840.7,268.7 840.7,278.7 839.4,280 831.4,280 830.1,278.7 830.1,268.7" fill="#fff" stroke="#3a3a3a" stroke-width="0.75" stroke-linejoin="miter"/>
<circle cx="835.4" cy="273.7" r="4.9" fill="#0a0a0a" stroke="#444444" stroke-width="0.62"/>
<line x1="832.1" y1="283" x2="838.7" y2="283" stroke="#444444" stroke-width="1.12"/>
<text transform="translate(847.6 293) rotate(-90)" x="0" y="0" font-size="6.14" textLength="34.3" lengthAdjust="spacingAndGlyphs" fill="#1e1e1e">0100BLFR6TJ</text>
<text x="828" y="242.4" font-size="6.14" textLength="20.6" lengthAdjust="spacingAndGlyphs" fill="#1e1e1e">MIN.  1M</text>
<line x1="823.7" y1="245.2" x2="873" y2="245.2" stroke="#444444" stroke-width="1.12"/>
<polygon points="876.2,245.2 871.2,243.3 871.2,247.1" fill="#1e1e1e" stroke="#1e1e1e" stroke-width="0.3" stroke-linejoin="miter"/>
<circle cx="879.4" cy="230.5" r="9.6" fill="none" stroke="#444444" stroke-width="1.12"/>
<text x="876.7" y="229.4" font-size="6.14" textLength="6.2" lengthAdjust="spacingAndGlyphs" fill="#1e1e1e">FO</text>
<text x="874.2" y="236.9" font-size="5.9" textLength="11.2" lengthAdjust="spacingAndGlyphs" fill="#1e1e1e">1023</text>
<text x="863.6" y="225.6" font-size="6.14" textLength="5.8" lengthAdjust="spacingAndGlyphs" fill="#1e1e1e">23</text>
<rect x="860.6" y="218" width="24.2" height="19.7" rx="2.2" fill="none" stroke="#c364d6" stroke-width="2.1"/>
<line x1="879.4" y1="240.2" x2="879.4" y2="250.4" stroke="#444444" stroke-width="1.12"/>
<rect x="877.8" y="250.2" width="3.2" height="6" fill="#fff" stroke="#444444" stroke-width="1.0"/>
<text x="881.4" y="246.5" font-size="6.37" textLength="22.9" lengthAdjust="spacingAndGlyphs" fill="#1e1e1e">400X800</text>
<text x="861.9" y="262.9" font-size="6.37" textLength="19.1" lengthAdjust="spacingAndGlyphs" fill="#1e1e1e">NOTE  5</text>
<polygon points="895.2,250 888,251.7 888,254.7 895.2,256.4" fill="#fff" stroke="#444444" stroke-width="1.12" stroke-linejoin="miter"/>
<circle cx="907.8" cy="253.2" r="3.9" fill="#fff" stroke="#444444" stroke-width="1.12"/>
<line x1="901.6" y1="248.6" x2="901.6" y2="257.8" stroke="#444444" stroke-width="1.0"/>
<line x1="903.6" y1="248.6" x2="903.6" y2="257.8" stroke="#444444" stroke-width="1.0"/>
<line x1="912" y1="248.6" x2="912" y2="257.8" stroke="#444444" stroke-width="1.0"/>
<line x1="914" y1="248.6" x2="914" y2="257.8" stroke="#444444" stroke-width="1.0"/>
<path d="M905 249 a5 5 0 0 0 0 8.4" fill="none" stroke="#1e1e1e" stroke-width="0.8"/>
<text x="888.6" y="265.6" font-size="6.37" textLength="34.9" lengthAdjust="spacingAndGlyphs" fill="#1e1e1e">0800BLER60J</text>
<text x="902" y="270.9" font-size="5.9" textLength="21.4" lengthAdjust="spacingAndGlyphs" fill="#1e1e1e">FB/LO/</text>
<text x="891.9" y="277.1" font-size="6.61" textLength="30.4" lengthAdjust="spacingAndGlyphs" fill="#1e1e1e">23-V-0206</text>
<rect x="889.3" y="270.4" width="35" height="8.3" rx="2.2" fill="none" stroke="#c364d6" stroke-width="2.1"/>
<polygon points="904.3,197.3 923.5,197.3 913.9,213.5" fill="#fff" stroke="#444444" stroke-width="1.12" stroke-linejoin="miter"/>
<text x="910.3" y="204" font-size="5.19" textLength="7.3" lengthAdjust="spacingAndGlyphs" fill="#1e1e1e">HpL</text>
<line x1="913.6" y1="213.5" x2="913.6" y2="253" stroke="#444444" stroke-width="1.12"/>
<text x="894.8" y="217" font-size="7.32" textLength="15" lengthAdjust="spacingAndGlyphs" fill="#1e1e1e">ER20</text>
<text x="916.6" y="217" font-size="7.32" textLength="20.2" lengthAdjust="spacingAndGlyphs" fill="#1e1e1e">AR20X</text>
<line x1="898.6" y1="220.3" x2="929.8" y2="220.3" stroke="#444444" stroke-width="1.0"/>
<polygon points="913.6,220.3 907.4,218.3 907.4,222.3" fill="#1e1e1e" stroke="#444444" stroke-width="0.88" stroke-linejoin="miter"/>
<polygon points="913.6,220.3 919.8,218.3 919.8,222.3" fill="#1e1e1e" stroke="#444444" stroke-width="0.88" stroke-linejoin="miter"/>
<text x="928" y="241.9" font-size="6.14" textLength="15.5" lengthAdjust="spacingAndGlyphs" fill="#1e1e1e">SLOPE</text>
<line x1="928" y1="245.2" x2="947.6" y2="245.2" stroke="#444444" stroke-width="1.12"/>
<polygon points="950.6,245.2 945.6,243.3 945.6,247.1" fill="#1e1e1e" stroke="#1e1e1e" stroke-width="0.3" stroke-linejoin="miter"/>
<text x="970.5" y="239.9" font-size="6.14" textLength="36.2" lengthAdjust="spacingAndGlyphs" fill="#1e1e1e">TO  HP  FLARE</text>
<text x="970.5" y="245.2" font-size="6.14" textLength="20.5" lengthAdjust="spacingAndGlyphs" fill="#1e1e1e">HEADER</text>
<text x="971" y="256.4" font-size="10" textLength="50" lengthAdjust="spacingAndGlyphs" fill="#3a3a3a" style="stroke-width:.1px">XB-4342-001</text>
<rect x="968" y="247.5" width="55.4" height="10" rx="2.5" fill="#e8894a" fill-opacity="0.0" stroke="#df8843" stroke-width="2.5"/>
<polyline points="1022.4,250 1025.4,252.6 1022.4,255.2" fill="none" stroke="#444444" stroke-width="0.88" stroke-linejoin="miter"/>
<text x="929.4" y="265.3" font-size="6.14" textLength="94" lengthAdjust="spacingAndGlyphs" fill="#1e1e1e">0800A-VF-43-L-0166-AR20X-05</text>
<rect x="926.8" y="258.2" width="98.6" height="9.3" rx="2.2" fill="none" stroke="#c364d6" stroke-width="2.1"/>
<rect x="150.8" y="243.7" width="10.4" height="34.3" fill="#fff" stroke="#444444" stroke-width="1.12" rx="2.2"/>
<path d="M151.2 276.4 q1.2 2 2.6 0 M160.8 244.7 q-1.2 2 -2.6 0" fill="none" stroke="#1e1e1e" stroke-width="0.7"/>
<text transform="translate(158.4 265.7) rotate(-90)" x="0" y="0" font-size="6.61" textLength="9.7" lengthAdjust="spacingAndGlyphs" fill="#1e1e1e">040</text>
<line x1="158.6" y1="256" x2="158.6" y2="265.7" stroke="#444444" stroke-width="0.62"/>
<line x1="156.1" y1="278" x2="156.1" y2="303.7" stroke="#444444" stroke-width="1.5"/>
<rect x="274" y="243.7" width="10.2" height="34.3" fill="#fff" stroke="#444444" stroke-width="1.12" rx="2.2"/>
<path d="M274.4 276.4 q1.2 2 2.6 0 M283.8 244.7 q-1.2 2 -2.6 0" fill="none" stroke="#1e1e1e" stroke-width="0.7"/>
<text transform="translate(281.5 265.7) rotate(-90)" x="0" y="0" font-size="6.61" textLength="9.7" lengthAdjust="spacingAndGlyphs" fill="#1e1e1e">040</text>
<line x1="281.7" y1="256" x2="281.7" y2="265.7" stroke="#444444" stroke-width="0.62"/>
<line x1="279" y1="278" x2="279" y2="296.2" stroke="#444444" stroke-width="1.5"/>
<rect x="405" y="233.7" width="10" height="35" fill="#fff" stroke="#444444" stroke-width="1.12" rx="2.2"/>
<path d="M405.4 267.1 q1.2 2 2.6 0 M414.6 234.7 q-1.2 2 -2.6 0" fill="none" stroke="#1e1e1e" stroke-width="0.7"/>
<text transform="translate(412.4 256.1) rotate(-90)" x="0" y="0" font-size="6.61" textLength="9.7" lengthAdjust="spacingAndGlyphs" fill="#1e1e1e">040</text>
<line x1="412.6" y1="246.3" x2="412.6" y2="256.1" stroke="#444444" stroke-width="0.62"/>
<polygon points="406.8,287.3 408.5,280.1 411.5,280.1 413.2,287.3" fill="#fff" stroke="#444444" stroke-width="1.12" stroke-linejoin="miter"/>
<text transform="translate(421.5 297.4) rotate(-90)" x="0" y="0" font-size="5.9" textLength="25" lengthAdjust="spacingAndGlyphs" fill="#1e1e1e">1000X600</text>
<line x1="160" y1="303.7" x2="410" y2="303.7" stroke="#444444" stroke-width="1.5"/>
<polygon points="156.6,303.7 161.6,301.8 161.6,305.6" fill="#1e1e1e" stroke="#1e1e1e" stroke-width="0.3" stroke-linejoin="miter"/>
<line x1="283" y1="296.2" x2="410" y2="296.2" stroke="#444444" stroke-width="1.5"/>
<polygon points="279.6,296.2 284.6,294.3 284.6,298.1" fill="#1e1e1e" stroke="#1e1e1e" stroke-width="0.3" stroke-linejoin="miter"/>
<text x="170.5" y="300.5" font-size="6.14" textLength="90.2" lengthAdjust="spacingAndGlyphs" fill="#1e1e1e">0600A-VF-23-L-0062-ED20-45</text>
<rect x="167.9" y="293.7" width="94.8" height="8.7" rx="2.2" fill="none" stroke="#c364d6" stroke-width="2.1"/>
<text x="293.6" y="292.6" font-size="6.14" textLength="91.4" lengthAdjust="spacingAndGlyphs" fill="#1e1e1e">0600A-VF-23-L-0063-ED20-45</text>
<rect x="291" y="285.4" width="96" height="9.6" rx="2.2" fill="none" stroke="#c364d6" stroke-width="2.1"/>
<text x="208.6" y="313.2" font-size="6.14" textLength="90.4" lengthAdjust="spacingAndGlyphs" fill="#1e1e1e">1400A-PV-23-L-0058-ED20-57</text>
<rect x="206" y="306.2" width="95" height="9.2" rx="2.2" fill="none" stroke="#c364d6" stroke-width="2.1"/>
<line x1="65.5" y1="316.2" x2="343.4" y2="316.2" stroke="#444444" stroke-width="1.5"/>
<rect x="343.4" y="311.1" width="35.6" height="10.5" fill="#fff" stroke="#444444" stroke-width="1.12" rx="2.2"/>
<path d="M344.4 311.5 q2 1.2 0 2.6 M377.4 321.2 q2 -1.2 0 -2.6" fill="none" stroke="#1e1e1e" stroke-width="0.7"/>
<text x="356.5" y="318.7" font-size="6.61" textLength="9.4" lengthAdjust="spacingAndGlyphs" fill="#1e1e1e">100</text>
<line x1="379" y1="316.2" x2="575.8" y2="316.2" stroke="#444444" stroke-width="1.5"/>
<line x1="575.8" y1="320" x2="575.8" y2="378" stroke="#444444" stroke-width="1.5"/>
<polygon points="575.8,316.2 573.9,321.2 577.7,321.2" fill="#1e1e1e" stroke="#1e1e1e" stroke-width="0.3" stroke-linejoin="miter"/>
<line x1="560.3" y1="320.4" x2="560.3" y2="337" stroke="#444444" stroke-width="1.5"/>
<rect x="555.3" y="336.9" width="10" height="34.9" fill="#fff" stroke="#444444" stroke-width="1.12" rx="2.2"/>
<path d="M555.7 370.2 q1.2 2 2.6 0 M564.9 337.9 q-1.2 2 -2.6 0" fill="none" stroke="#1e1e1e" stroke-width="0.7"/>
<text transform="translate(562.7 359.2) rotate(-90)" x="0" y="0" font-size="6.61" textLength="9.7" lengthAdjust="spacingAndGlyphs" fill="#1e1e1e">100</text>
<line x1="562.9" y1="349.5" x2="562.9" y2="359.2" stroke="#444444" stroke-width="0.62"/>
<line x1="560.3" y1="371.8" x2="560.3" y2="378" stroke="#444444" stroke-width="1.5"/>
<line x1="410" y1="320.4" x2="410" y2="454.7" stroke="#444444" stroke-width="1.5"/>
<text transform="translate(406.4 446.6) rotate(-90)" x="0" y="0" font-size="6.14" textLength="88.6" lengthAdjust="spacingAndGlyphs" fill="#1e1e1e">1000A-VF-23-L-0061-ED20-45</text>
<rect x="399.6" y="355.6" width="9.2" height="93.4" rx="2.2" fill="none" stroke="#c364d6" stroke-width="2.1"/>
<rect x="405" y="454.7" width="9.6" height="32.9" fill="#fff" stroke="#444444" stroke-width="1.12" rx="2.2"/>
<path d="M405.4 486 q1.2 2 2.6 0 M414.2 455.7 q-1.2 2 -2.6 0" fill="none" stroke="#1e1e1e" stroke-width="0.7"/>
<text transform="translate(412.2 476) rotate(-90)" x="0" y="0" font-size="6.61" textLength="9.7" lengthAdjust="spacingAndGlyphs" fill="#1e1e1e">050</text>
<line x1="412.4" y1="466.3" x2="412.4" y2="476" stroke="#444444" stroke-width="0.62"/>
<line x1="410" y1="487.6" x2="410" y2="557.4" stroke="#444444" stroke-width="1.5"/>
<line x1="410" y1="557.4" x2="417" y2="557.4" stroke="#444444" stroke-width="1.5"/>
<line x1="65.5" y1="249.5" x2="147.9" y2="249.5" stroke="#444444" stroke-width="1.12" stroke-dasharray="2.2 2.8"/>
<line x1="147.9" y1="249.5" x2="147.9" y2="333" stroke="#444444" stroke-width="1.12" stroke-dasharray="2.2 2.8"/>
<line x1="53" y1="255" x2="65.5" y2="255" stroke="#444444" stroke-width="1.12" stroke-dasharray="2.2 2.8"/>
<line x1="65.5" y1="249.5" x2="65.5" y2="272" stroke="#444444" stroke-width="1.12" stroke-dasharray="2.2 2.8"/>
<circle cx="84.2" cy="263.7" r="9.8" fill="none" stroke="#444444" stroke-width="1.12"/>
<text x="81.5" y="262.4" font-size="6.14" textLength="6.2" lengthAdjust="spacingAndGlyphs" fill="#1e1e1e">FV</text>
<text x="79" y="270.1" font-size="5.9" textLength="11.2" lengthAdjust="spacingAndGlyphs" fill="#1e1e1e">1012</text>
<text x="68.6" y="258.6" font-size="6.14" textLength="5.8" lengthAdjust="spacingAndGlyphs" fill="#1e1e1e">23</text>
<rect x="65.5" y="251.2" width="24.5" height="20" rx="2.2" fill="none" stroke="#c364d6" stroke-width="2.1"/>
<line x1="78.4" y1="271.6" x2="72.2" y2="277.6" stroke="#444444" stroke-width="1.0"/>
<text x="80" y="281.5" font-size="6.37" textLength="25.4" lengthAdjust="spacingAndGlyphs" fill="#1e1e1e">FV3.  PSV</text>
<text x="53" y="280.5" font-size="6.37" textLength="5.7" lengthAdjust="spacingAndGlyphs" fill="#1e1e1e">00</text>
<line x1="65.5" y1="275" x2="65.5" y2="316.2" stroke="#444444" stroke-width="1.5"/>
<polygon points="62.3,280.2 64,273 67,273 68.7,280.2" fill="#fff" stroke="#444444" stroke-width="1.12" stroke-linejoin="miter"/>
<polygon points="65.5,285 60.4,281.4 60.4,288.6" fill="#fff" stroke="#444444" stroke-width="1.0" stroke-linejoin="miter"/>
<polygon points="65.5,285 63.4,290.6 67.6,290.6" fill="#fff" stroke="#444444" stroke-width="1.0" stroke-linejoin="miter"/>
<polyline points="53,280 59,285 53,290" fill="none" stroke="#444444" stroke-width="1.0" stroke-linejoin="miter"/>
<polygon points="62.3,299 64,291.8 67,291.8 68.7,299" fill="#fff" stroke="#444444" stroke-width="1.12" stroke-linejoin="miter"/>
<text x="68.7" y="286.7" font-size="6.37" textLength="6.3" lengthAdjust="spacingAndGlyphs" fill="#1e1e1e">FO</text>
<polyline points="72,291.8 83.7,285.4 109.2,285.4" fill="none" stroke="#444444" stroke-width="1.0" stroke-linejoin="miter"/>
<line x1="73.7" y1="289.6" x2="80.3" y2="289.6" stroke="#444444" stroke-width="1.0"/>
<line x1="77" y1="289.6" x2="77" y2="296.8" stroke="#444444" stroke-width="1.0"/>
<polygon points="77,298.8 75.4,295.8 78.6,295.8" fill="#1e1e1e" stroke="#1e1e1e" stroke-width="0.3" stroke-linejoin="miter"/>
<text x="73.7" y="305.5" font-size="5.9" textLength="6.6" lengthAdjust="spacingAndGlyphs" fill="#1e1e1e">CC</text>
<text x="70" y="312.3" font-size="6.37" textLength="27.4" lengthAdjust="spacingAndGlyphs" fill="#1e1e1e">NOTE  2,17</text>
<text transform="translate(61.7 317) rotate(-90)" x="0" y="0" font-size="5.9" textLength="25" lengthAdjust="spacingAndGlyphs" fill="#1e1e1e">1400X600</text>
<line x1="120" y1="313.1" x2="138" y2="313.1" stroke="#444444" stroke-width="1.12"/>
<polygon points="141.4,313.1 136.4,311.2 136.4,315" fill="#1e1e1e" stroke="#1e1e1e" stroke-width="0.3" stroke-linejoin="miter"/>
<rect x="132.4" y="333.1" width="68.2" height="30.5" fill="none" stroke="#444444" stroke-width="1.12"/>
<rect x="132.4" y="333.6" width="6.4" height="17.4" fill="none" stroke="#444444" stroke-width="1.0"/>
<line x1="132.4" y1="339.4" x2="138.8" y2="339.4" stroke="#444444" stroke-width="0.88"/>
<line x1="132.4" y1="345.2" x2="138.8" y2="345.2" stroke="#444444" stroke-width="0.88"/>
<text x="134.3" y="338.3" font-size="4.96" textLength="2.5" lengthAdjust="spacingAndGlyphs" fill="#1e1e1e">C</text>
<text x="134.3" y="344.1" font-size="4.96" textLength="2.5" lengthAdjust="spacingAndGlyphs" fill="#1e1e1e">H</text>
<text x="134.3" y="349.9" font-size="4.96" textLength="2.5" lengthAdjust="spacingAndGlyphs" fill="#1e1e1e">L</text>
<circle cx="146.3" cy="342.4" r="8.8" fill="none" stroke="#444444" stroke-width="1.12"/>
<text x="142.1" y="341.5" font-size="5.9" textLength="9" lengthAdjust="spacingAndGlyphs" fill="#1e1e1e">FIC</text>
<text x="141.2" y="348.2" font-size="5.66" textLength="10.8" lengthAdjust="spacingAndGlyphs" fill="#1e1e1e">1012</text>
<text x="124.8" y="336" font-size="6.14" textLength="5.8" lengthAdjust="spacingAndGlyphs" fill="#1e1e1e">23</text>
<rect x="122.4" y="329.9" width="30.7" height="19.5" rx="2.2" fill="none" stroke="#c364d6" stroke-width="2.1"/>
<polygon points="132.4,343.1 129.4,341.7 129.4,344.5" fill="#1e1e1e" stroke="#1e1e1e" stroke-width="0.3" stroke-linejoin="miter"/>
<text x="163.6" y="339.8" font-size="6.37" textLength="28.2" lengthAdjust="spacingAndGlyphs" fill="#1e1e1e">ANTISURGE</text>
<text x="173.6" y="345.2" font-size="6.37" textLength="11.2" lengthAdjust="spacingAndGlyphs" fill="#1e1e1e">AND</text>
<text x="161.8" y="350.5" font-size="6.37" textLength="35.4" lengthAdjust="spacingAndGlyphs" fill="#1e1e1e">COMPRESSOR</text>
<text x="159.8" y="356" font-size="6.37" textLength="39.2" lengthAdjust="spacingAndGlyphs" fill="#1e1e1e">PERFORMANCE</text>
<text x="161.8" y="361.5" font-size="6.37" textLength="33.8" lengthAdjust="spacingAndGlyphs" fill="#1e1e1e">CONTROLLER</text>
<rect x="199.8" y="336" width="1.8" height="1.8" fill="#1e1e1e" stroke="#1e1e1e" stroke-width="0.2"/>
<rect x="199.8" y="342.2" width="1.8" height="1.8" fill="#1e1e1e" stroke="#1e1e1e" stroke-width="0.2"/>
<rect x="199.8" y="348.5" width="1.8" height="1.8" fill="#1e1e1e" stroke="#1e1e1e" stroke-width="0.2"/>
<rect x="147" y="362.6" width="1.8" height="2" fill="#1e1e1e" stroke="#1e1e1e" stroke-width="0.2"/>
<line x1="201.6" y1="336.9" x2="540" y2="336.9" stroke="#444444" stroke-width="1.12" stroke-dasharray="2.2 2.8"/>
<line x1="53" y1="343.1" x2="122.4" y2="343.1" stroke="#444444" stroke-width="1.12" stroke-dasharray="2.2 2.8"/>
<line x1="201.6" y1="343.1" x2="443.5" y2="343.1" stroke="#444444" stroke-width="1.12" stroke-dasharray="2.2 2.8"/>
<line x1="89.5" y1="349.4" x2="132.4" y2="349.4" stroke="#444444" stroke-width="1.12" stroke-dasharray="2.2 2.8"/>
<line x1="201.6" y1="349.4" x2="337.6" y2="349.4" stroke="#444444" stroke-width="1.12" stroke-dasharray="2.2 2.8"/>
<line x1="337.6" y1="349.4" x2="337.6" y2="361.6" stroke="#444444" stroke-width="1.12" stroke-dasharray="2.2 2.8"/>
<line x1="89.5" y1="349.4" x2="89.5" y2="371.6" stroke="#444444" stroke-width="1.12" stroke-dasharray="2.2 2.8"/>
<line x1="147.9" y1="363.6" x2="147.9" y2="518.7" stroke="#444444" stroke-width="1.12" stroke-dasharray="2.2 2.8"/>
<line x1="540" y1="336.9" x2="540" y2="378" stroke="#444444" stroke-width="1.12" stroke-dasharray="2.2 2.8"/>
<line x1="443.5" y1="343.1" x2="443.5" y2="355" stroke="#444444" stroke-width="1.12" stroke-dasharray="2.2 2.8"/>
<rect x="73.7" y="371.6" width="25.5" height="18.9" fill="none" stroke="#444444" stroke-width="1.0"/>
<rect x="73.7" y="371.6" width="6.1" height="18.9" fill="none" stroke="#444444" stroke-width="1.0"/>
<line x1="73.7" y1="377.9" x2="79.8" y2="377.9" stroke="#444444" stroke-width="0.88"/>
<line x1="73.7" y1="384.2" x2="79.8" y2="384.2" stroke="#444444" stroke-width="0.88"/>
<text x="75.5" y="376.5" font-size="4.96" textLength="2.5" lengthAdjust="spacingAndGlyphs" fill="#1e1e1e">C</text>
<text x="75.5" y="382.8" font-size="4.96" textLength="2.5" lengthAdjust="spacingAndGlyphs" fill="#1e1e1e">H</text>
<text x="75.5" y="389.1" font-size="4.96" textLength="2.5" lengthAdjust="spacingAndGlyphs" fill="#1e1e1e">L</text>
<circle cx="88.4" cy="381" r="9.2" fill="none" stroke="#444444" stroke-width="1.12"/>
<text x="85.5" y="380" font-size="6.14" textLength="6.2" lengthAdjust="spacingAndGlyphs" fill="#1e1e1e">FI</text>
<text x="83" y="387.1" font-size="5.9" textLength="11.2" lengthAdjust="spacingAndGlyphs" fill="#1e1e1e">1012</text>
<text x="66" y="377" font-size="6.14" textLength="5.8" lengthAdjust="spacingAndGlyphs" fill="#1e1e1e">23</text>
<rect x="63.7" y="370.6" width="32" height="18.7" rx="2.2" fill="none" stroke="#c364d6" stroke-width="2.1"/>
<line x1="89.5" y1="390.5" x2="89.5" y2="403.8" stroke="#444444" stroke-width="1.12" stroke-dasharray="2.2 2.8"/>
<circle cx="89.2" cy="413.5" r="9.7" fill="none" stroke="#444444" stroke-width="1.12"/>
<text x="86.5" y="412.4" font-size="6.14" textLength="6.2" lengthAdjust="spacingAndGlyphs" fill="#1e1e1e">FT</text>
<text x="84" y="419.7" font-size="5.9" textLength="11.2" lengthAdjust="spacingAndGlyphs" fill="#1e1e1e">1012</text>
<text x="75" y="408.6" font-size="6.14" textLength="5.8" lengthAdjust="spacingAndGlyphs" fill="#1e1e1e">23</text>
<path d="M89.2 402.7 A11.2 11.2 0 0 1 100.4 413.9" fill="none" stroke="#1e1e1e" stroke-width="1.1"/>
<path d="M89.2 398.3 A15.6 15.6 0 0 1 104.8 413.9" fill="none" stroke="#1e1e1e" stroke-width="1.1"/>
<line x1="89.2" y1="404.2" x2="89.2" y2="398.3" stroke="#444444" stroke-width="1.0"/>
<line x1="93.5" y1="403.6" x2="95.2" y2="399.5" stroke="#444444" stroke-width="1.0"/>
<line x1="97.1" y1="406" x2="100.2" y2="402.9" stroke="#444444" stroke-width="1.0"/>
<line x1="99.5" y1="409.6" x2="103.6" y2="407.9" stroke="#444444" stroke-width="1.0"/>
<line x1="98.9" y1="413.9" x2="104.8" y2="413.9" stroke="#444444" stroke-width="1.0"/>
<rect x="72" y="401.8" width="24.2" height="19.2" rx="2.2" fill="none" stroke="#c364d6" stroke-width="2.1"/>
<line x1="53" y1="414.3" x2="79.6" y2="414.3" stroke="#444444" stroke-width="1.12"/>
<line x1="104.8" y1="414.3" x2="121.7" y2="414.3" stroke="#444444" stroke-width="1.12"/>
<line x1="121.7" y1="414.3" x2="121.7" y2="475.7" stroke="#444444" stroke-width="1.12"/>
<line x1="91.2" y1="475.7" x2="121.7" y2="475.7" stroke="#444444" stroke-width="1.12"/>
<line x1="91.2" y1="475.7" x2="91.2" y2="479.3" stroke="#444444" stroke-width="1.12"/>
<line x1="91.2" y1="482.2" x2="91.2" y2="488.2" stroke="#444444" stroke-width="1.12"/>
<line x1="86.3" y1="471.2" x2="86.3" y2="486.5" stroke="#444444" stroke-width="1.12"/>
<rect x="121.7" y="433.1" width="3.7" height="12.9" fill="#fff" stroke="#444444" stroke-width="1.0"/>
<line x1="121.7" y1="433.1" x2="125.4" y2="446" stroke="#444444" stroke-width="0.88"/>
<line x1="121.7" y1="446" x2="125.4" y2="433.1" stroke="#444444" stroke-width="0.88"/>
<rect x="121.7" y="446" width="3.7" height="12.8" fill="#fff" stroke="#444444" stroke-width="1.0"/>
<line x1="121.7" y1="446" x2="125.4" y2="458.8" stroke="#444444" stroke-width="0.88"/>
<line x1="121.7" y1="458.8" x2="125.4" y2="446" stroke="#444444" stroke-width="0.88"/>
<rect x="125.4" y="442.6" width="11.8" height="6.8" fill="#fff" stroke="#444444" stroke-width="1.0"/>
<line x1="125.4" y1="442.6" x2="137.2" y2="449.4" stroke="#444444" stroke-width="0.88"/>
<line x1="125.4" y1="449.4" x2="137.2" y2="442.6" stroke="#444444" stroke-width="0.88"/>
<line x1="139.9" y1="442.6" x2="139.9" y2="449.4" stroke="#444444" stroke-width="1.12"/>
<text transform="translate(110.6 466) rotate(-90)" x="0" y="0" font-size="5.66" textLength="35" lengthAdjust="spacingAndGlyphs" fill="#1e1e1e">0075BCB03U</text>
<text transform="translate(117.1 458.6) rotate(-90)" x="0" y="0" font-size="6.37" textLength="28" lengthAdjust="spacingAndGlyphs" fill="#1e1e1e">23-V-0334</text>
<rect x="109.9" y="428.2" width="9.8" height="32.8" rx="2.2" fill="none" stroke="#c364d6" stroke-width="2.1"/>
<text transform="translate(59.5 446) rotate(-90)" x="0" y="0" font-size="5.9" textLength="16" lengthAdjust="spacingAndGlyphs" fill="#1e1e1e">0335</text>
<text transform="translate(65.3 447.2) rotate(-90)" x="0" y="0" font-size="5.19" textLength="18.7" lengthAdjust="spacingAndGlyphs" fill="#1e1e1e">CBD03U</text>
<rect x="50" y="428.5" width="11.2" height="18.7" rx="2.2" fill="none" stroke="#c364d6" stroke-width="2.1"/>
<circle cx="86.8" cy="461.5" r="9.7" fill="none" stroke="#444444" stroke-width="1.12"/>
<text x="83.5" y="460.2" font-size="6.14" textLength="6.2" lengthAdjust="spacingAndGlyphs" fill="#1e1e1e">FE</text>
<text x="81.2" y="467.7" font-size="5.9" textLength="11.2" lengthAdjust="spacingAndGlyphs" fill="#1e1e1e">1012</text>
<rect x="70" y="449.7" width="22.6" height="20.8" rx="2.2" fill="none" stroke="#c364d6" stroke-width="2.1"/>
<line x1="88.7" y1="479.3" x2="94.6" y2="479.3" stroke="#444444" stroke-width="1.0"/>
<line x1="88.7" y1="482.2" x2="94.6" y2="482.2" stroke="#444444" stroke-width="1.0"/>
<text x="83.2" y="498.5" font-size="6.37" textLength="14.2" lengthAdjust="spacingAndGlyphs" fill="#1e1e1e">POINT</text>
<text x="83.2" y="504.7" font-size="6.37" textLength="13" lengthAdjust="spacingAndGlyphs" fill="#1e1e1e">7,9,16</text>
<rect x="206.6" y="371.6" width="19.4" height="18.9" fill="none" stroke="#444444" stroke-width="1.0"/>
<circle cx="216.3" cy="381" r="9.2" fill="none" stroke="#444444" stroke-width="1.12"/>
<text x="212.1" y="379.9" font-size="5.9" textLength="9" lengthAdjust="spacingAndGlyphs" fill="#1e1e1e">PDI</text>
<text x="211" y="387.1" font-size="5.9" textLength="11.2" lengthAdjust="spacingAndGlyphs" fill="#1e1e1e">1013</text>
<text x="198.4" y="377" font-size="6.14" textLength="5.8" lengthAdjust="spacingAndGlyphs" fill="#1e1e1e">23</text>
<rect x="195.6" y="370.3" width="25.4" height="17.7" rx="2.2" fill="none" stroke="#c364d6" stroke-width="2.1"/>
<text x="228" y="380.1" font-size="6.37" textLength="30" lengthAdjust="spacingAndGlyphs" fill="#1e1e1e">H=0.25BAR</text>
<line x1="216.3" y1="390.5" x2="216.3" y2="403.8" stroke="#444444" stroke-width="1.12" stroke-dasharray="2.2 2.8"/>
<circle cx="216" cy="413.5" r="9.7" fill="none" stroke="#444444" stroke-width="1.12"/>
<text x="211.9" y="412.3" font-size="5.9" textLength="9" lengthAdjust="spacingAndGlyphs" fill="#1e1e1e">PDT</text>
<text x="210.8" y="419.7" font-size="5.9" textLength="11.2" lengthAdjust="spacingAndGlyphs" fill="#1e1e1e">1013</text>
<text x="200" y="408.6" font-size="6.14" textLength="5.8" lengthAdjust="spacingAndGlyphs" fill="#1e1e1e">23</text>
<rect x="197.3" y="401.8" width="23.7" height="19.2" rx="2.2" fill="none" stroke="#c364d6" stroke-width="2.1"/>
<text x="204.3" y="432" font-size="6.37" textLength="23" lengthAdjust="spacingAndGlyphs" fill="#1e1e1e">NOTE  14</text>
<line x1="170.6" y1="414.3" x2="206.3" y2="414.3" stroke="#444444" stroke-width="1.12"/>
<line x1="225.7" y1="414.3" x2="263.5" y2="414.3" stroke="#444444" stroke-width="1.12"/>
<line x1="186.4" y1="411.7" x2="191.6" y2="416.9" stroke="#444444" stroke-width="1.0"/>
<line x1="186.4" y1="416.9" x2="191.6" y2="411.7" stroke="#444444" stroke-width="1.0"/>
<line x1="244.6" y1="411.7" x2="249.8" y2="416.9" stroke="#444444" stroke-width="1.0"/>
<line x1="244.6" y1="416.9" x2="249.8" y2="411.7" stroke="#444444" stroke-width="1.0"/>
<line x1="168" y1="420.9" x2="173.2" y2="426.1" stroke="#444444" stroke-width="1.0"/>
<line x1="168" y1="426.1" x2="173.2" y2="420.9" stroke="#444444" stroke-width="1.0"/>
<line x1="260.9" y1="420.9" x2="266.1" y2="426.1" stroke="#444444" stroke-width="1.0"/>
<line x1="260.9" y1="426.1" x2="266.1" y2="420.9" stroke="#444444" stroke-width="1.0"/>
<line x1="170.6" y1="414.3" x2="170.6" y2="488.2" stroke="#444444" stroke-width="1.12"/>
<line x1="263.5" y1="414.3" x2="263.5" y2="488.2" stroke="#444444" stroke-width="1.12"/>
<rect x="166.9" y="433.1" width="3.7" height="12.9" fill="#fff" stroke="#444444" stroke-width="1.0"/>
<line x1="166.9" y1="433.1" x2="170.6" y2="446" stroke="#444444" stroke-width="0.88"/>
<line x1="166.9" y1="446" x2="170.6" y2="433.1" stroke="#444444" stroke-width="0.88"/>
<rect x="166.9" y="446" width="3.7" height="12.8" fill="#fff" stroke="#444444" stroke-width="1.0"/>
<line x1="166.9" y1="446" x2="170.6" y2="458.8" stroke="#444444" stroke-width="0.88"/>
<line x1="166.9" y1="458.8" x2="170.6" y2="446" stroke="#444444" stroke-width="0.88"/>
<rect x="154.3" y="442.6" width="12.6" height="6.8" fill="#fff" stroke="#444444" stroke-width="1.0"/>
<line x1="154.3" y1="442.6" x2="166.9" y2="449.4" stroke="#444444" stroke-width="0.88"/>
<line x1="154.3" y1="449.4" x2="166.9" y2="442.6" stroke="#444444" stroke-width="0.88"/>
<line x1="151.1" y1="442.6" x2="151.1" y2="449.4" stroke="#444444" stroke-width="1.12"/>
<text transform="translate(178.2 458.6) rotate(-90)" x="0" y="0" font-size="6.37" textLength="28" lengthAdjust="spacingAndGlyphs" fill="#1e1e1e">23-V-0337</text>
<rect x="171" y="428.2" width="9.8" height="32.8" rx="2.2" fill="none" stroke="#c364d6" stroke-width="2.1"/>
<text transform="translate(184.6 466) rotate(-90)" x="0" y="0" font-size="5.66" textLength="35" lengthAdjust="spacingAndGlyphs" fill="#1e1e1e">0200CBD03U</text>
<rect x="263.5" y="433.1" width="3.7" height="12.9" fill="#fff" stroke="#444444" stroke-width="1.0"/>
<line x1="263.5" y1="433.1" x2="267.2" y2="446" stroke="#444444" stroke-width="0.88"/>
<line x1="263.5" y1="446" x2="267.2" y2="433.1" stroke="#444444" stroke-width="0.88"/>
<rect x="263.5" y="446" width="3.7" height="12.8" fill="#fff" stroke="#444444" stroke-width="1.0"/>
<line x1="263.5" y1="446" x2="267.2" y2="458.8" stroke="#444444" stroke-width="0.88"/>
<line x1="263.5" y1="458.8" x2="267.2" y2="446" stroke="#444444" stroke-width="0.88"/>
<rect x="267.2" y="442.6" width="12.5" height="6.8" fill="#fff" stroke="#444444" stroke-width="1.0"/>
<line x1="267.2" y1="442.6" x2="279.7" y2="449.4" stroke="#444444" stroke-width="0.88"/>
<line x1="267.2" y1="449.4" x2="279.7" y2="442.6" stroke="#444444" stroke-width="0.88"/>
<line x1="282.7" y1="442.6" x2="282.7" y2="449.4" stroke="#444444" stroke-width="1.12"/>
<text transform="translate(253 466) rotate(-90)" x="0" y="0" font-size="5.66" textLength="35" lengthAdjust="spacingAndGlyphs" fill="#1e1e1e">0200CBD03U</text>
<text transform="translate(259.1 458.6) rotate(-90)" x="0" y="0" font-size="6.37" textLength="27.7" lengthAdjust="spacingAndGlyphs" fill="#1e1e1e">23-V-0338</text>
<rect x="252.7" y="428.5" width="8.3" height="32.5" rx="2.2" fill="none" stroke="#c364d6" stroke-width="2.1"/>
<rect x="208" y="451" width="19.3" height="18.7" fill="none" stroke="#444444" stroke-width="1.12"/>
<line x1="208" y1="469.7" x2="227.3" y2="451" stroke="#444444" stroke-width="1.0"/>
<text x="209.6" y="457.1" font-size="5.9" textLength="9" lengthAdjust="spacingAndGlyphs" fill="#1e1e1e">23S</text>
<text x="216.4" y="468.4" font-size="5.43" textLength="9.6" lengthAdjust="spacingAndGlyphs" fill="#1e1e1e">0151</text>
<rect x="206.8" y="449.7" width="18" height="19.3" rx="2.2" fill="none" stroke="#c364d6" stroke-width="2.1"/>
<rect x="226.4" y="450.2" width="1.8" height="1.8" fill="#1e1e1e" stroke="#1e1e1e" stroke-width="0.2"/>
<line x1="217" y1="469.7" x2="217" y2="481" stroke="#444444" stroke-width="1.12"/>
<text x="213.5" y="485.6" font-size="6.14" textLength="6.8" lengthAdjust="spacingAndGlyphs" fill="#1e1e1e">TS</text>
<rect x="321.4" y="361.6" width="26.2" height="20" fill="none" stroke="#444444" stroke-width="1.0"/>
<rect x="321.4" y="361.6" width="6.2" height="20" fill="none" stroke="#444444" stroke-width="1.0"/>
<line x1="321.4" y1="368.3" x2="327.6" y2="368.3" stroke="#444444" stroke-width="0.88"/>
<line x1="321.4" y1="374.9" x2="327.6" y2="374.9" stroke="#444444" stroke-width="0.88"/>
<text x="323.2" y="366.7" font-size="4.96" textLength="2.5" lengthAdjust="spacingAndGlyphs" fill="#1e1e1e">C</text>
<text x="323.2" y="373.4" font-size="4.96" textLength="2.5" lengthAdjust="spacingAndGlyphs" fill="#1e1e1e">H</text>
<text x="323.2" y="380.1" font-size="4.96" textLength="2.5" lengthAdjust="spacingAndGlyphs" fill="#1e1e1e">L</text>
<circle cx="337.4" cy="371.6" r="9.4" fill="none" stroke="#444444" stroke-width="1.12"/>
<text x="334.7" y="370.6" font-size="6.14" textLength="6.2" lengthAdjust="spacingAndGlyphs" fill="#1e1e1e">PI</text>
<text x="331.1" y="377.8" font-size="5.66" textLength="13.4" lengthAdjust="spacingAndGlyphs" fill="#1e1e1e">1012A</text>
<text x="313.8" y="367.8" font-size="6.14" textLength="5.8" lengthAdjust="spacingAndGlyphs" fill="#1e1e1e">23</text>
<text x="349.6" y="370.3" font-size="6.37" textLength="28.7" lengthAdjust="spacingAndGlyphs" fill="#1e1e1e">H=35BARG</text>
<text x="349.6" y="376.6" font-size="6.37" textLength="28" lengthAdjust="spacingAndGlyphs" fill="#1e1e1e">L=20BARG</text>
<text x="349.6" y="382.9" font-size="6.37" textLength="22.4" lengthAdjust="spacingAndGlyphs" fill="#1e1e1e">NOTE  18</text>
<line x1="337.6" y1="381.6" x2="337.6" y2="396.4" stroke="#444444" stroke-width="1.12" stroke-dasharray="2.2 2.8"/>
<circle cx="337.1" cy="406" r="9.7" fill="none" stroke="#444444" stroke-width="1.12"/>
<text x="334.4" y="405" font-size="6.14" textLength="6.2" lengthAdjust="spacingAndGlyphs" fill="#1e1e1e">PT</text>
<text x="330.8" y="412.2" font-size="5.66" textLength="13.4" lengthAdjust="spacingAndGlyphs" fill="#1e1e1e">1012A</text>
<text x="322.6" y="402.2" font-size="6.14" textLength="5.8" lengthAdjust="spacingAndGlyphs" fill="#1e1e1e">23</text>
<path d="M337.1 395.2 A11.2 11.2 0 0 1 348.3 406.4" fill="none" stroke="#1e1e1e" stroke-width="1.1"/>
<path d="M337.1 390.8 A15.6 15.6 0 0 1 352.7 406.4" fill="none" stroke="#1e1e1e" stroke-width="1.1"/>
<line x1="337.1" y1="396.7" x2="337.1" y2="390.8" stroke="#444444" stroke-width="1.0"/>
<line x1="341.4" y1="396.1" x2="343.1" y2="392" stroke="#444444" stroke-width="1.0"/>
<line x1="345" y1="398.5" x2="348.1" y2="395.4" stroke="#444444" stroke-width="1.0"/>
<line x1="347.4" y1="402.1" x2="351.5" y2="400.4" stroke="#444444" stroke-width="1.0"/>
<line x1="346.8" y1="406.4" x2="352.7" y2="406.4" stroke="#444444" stroke-width="1.0"/>
<rect x="319.7" y="395.3" width="23.7" height="18.7" rx="2.2" fill="none" stroke="#c364d6" stroke-width="2.1"/>
<line x1="337.6" y1="415.8" x2="337.6" y2="488.2" stroke="#444444" stroke-width="1.12"/>
<rect x="337.6" y="433.1" width="3.7" height="12.9" fill="#fff" stroke="#444444" stroke-width="1.0"/>
<line x1="337.6" y1="433.1" x2="341.3" y2="446" stroke="#444444" stroke-width="0.88"/>
<line x1="337.6" y1="446" x2="341.3" y2="433.1" stroke="#444444" stroke-width="0.88"/>
<rect x="337.6" y="446" width="3.7" height="12.8" fill="#fff" stroke="#444444" stroke-width="1.0"/>
<line x1="337.6" y1="446" x2="341.3" y2="458.8" stroke="#444444" stroke-width="0.88"/>
<line x1="337.6" y1="458.8" x2="341.3" y2="446" stroke="#444444" stroke-width="0.88"/>
<rect x="341.3" y="442.6" width="12.1" height="6.8" fill="#fff" stroke="#444444" stroke-width="1.0"/>
<line x1="341.3" y1="442.6" x2="353.4" y2="449.4" stroke="#444444" stroke-width="0.88"/>
<line x1="341.3" y1="449.4" x2="353.4" y2="442.6" stroke="#444444" stroke-width="0.88"/>
<line x1="356.6" y1="442.6" x2="356.6" y2="449.4" stroke="#444444" stroke-width="1.12"/>
<text transform="translate(327.6 466) rotate(-90)" x="0" y="0" font-size="5.66" textLength="35" lengthAdjust="spacingAndGlyphs" fill="#1e1e1e">0075CBD03U</text>
<text transform="translate(333.4 458.6) rotate(-90)" x="0" y="0" font-size="6.37" textLength="27.7" lengthAdjust="spacingAndGlyphs" fill="#1e1e1e">23-V-0339</text>
<rect x="327.2" y="428.5" width="7.9" height="32.5" rx="2.2" fill="none" stroke="#c364d6" stroke-width="2.1"/>
<text x="343.4" y="456" font-size="6.37" textLength="20" lengthAdjust="spacingAndGlyphs" fill="#1e1e1e">NOTE  7</text>
<rect x="428.4" y="358.6" width="25" height="19.4" fill="none" stroke="#444444" stroke-width="1.0"/>
<rect x="428.4" y="358.6" width="6" height="19.4" fill="none" stroke="#444444" stroke-width="1.0"/>
<line x1="428.4" y1="365.1" x2="434.4" y2="365.1" stroke="#444444" stroke-width="0.88"/>
<line x1="428.4" y1="371.5" x2="434.4" y2="371.5" stroke="#444444" stroke-width="0.88"/>
<text x="430.1" y="363.6" font-size="4.96" textLength="2.5" lengthAdjust="spacingAndGlyphs" fill="#1e1e1e">C</text>
<text x="430.1" y="370.1" font-size="4.96" textLength="2.5" lengthAdjust="spacingAndGlyphs" fill="#1e1e1e">H</text>
<text x="430.1" y="376.6" font-size="4.96" textLength="2.5" lengthAdjust="spacingAndGlyphs" fill="#1e1e1e">L</text>
<circle cx="442.6" cy="367.8" r="8.8" fill="none" stroke="#444444" stroke-width="1.12"/>
<text x="440" y="366.9" font-size="5.9" textLength="6" lengthAdjust="spacingAndGlyphs" fill="#1e1e1e">PI</text>
<text x="436.6" y="373.6" font-size="5.43" textLength="12.9" lengthAdjust="spacingAndGlyphs" fill="#1e1e1e">1012B</text>
<text x="419.6" y="364.5" font-size="6.14" textLength="5.8" lengthAdjust="spacingAndGlyphs" fill="#1e1e1e">23</text>
<rect x="417.6" y="359" width="35.6" height="15.6" fill="none" stroke="#27278f" stroke-width="1.7" stroke-dasharray="4 3"/>
<text x="446" y="356.3" font-size="6.37" textLength="22.4" lengthAdjust="spacingAndGlyphs" fill="#1e1e1e">NOTE  19</text>
<text x="455.4" y="367.1" font-size="6.37" textLength="28.6" lengthAdjust="spacingAndGlyphs" fill="#1e1e1e">H=86BARG</text>
<text x="455.4" y="373.9" font-size="6.37" textLength="28" lengthAdjust="spacingAndGlyphs" fill="#1e1e1e">L=70BARG</text>
<text x="507.6" y="359.6" font-size="6.37" textLength="22.8" lengthAdjust="spacingAndGlyphs" fill="#1e1e1e">NOTE  13</text>
<polyline points="508.4,378 517.6,362.3 526.8,378" fill="none" stroke="#444444" stroke-width="1.12" stroke-linejoin="miter"/>
<text x="512" y="376.6" font-size="5.43" textLength="11.4" lengthAdjust="spacingAndGlyphs" fill="#1e1e1e">PSD</text>
<text transform="translate(684.6 408) rotate(-90)" x="0" y="0" font-size="6.14" textLength="93.4" lengthAdjust="spacingAndGlyphs" fill="#1e1e1e">0300A-PB-23-L-0060-ED20-04</text>
<rect x="677.7" y="312" width="9.3" height="74" rx="2.2" fill="none" stroke="#c364d6" stroke-width="2.1"/>
<rect x="739.8" y="346.1" width="7.2" height="19.9" fill="#fff" stroke="#444444" stroke-width="1.0"/>
<polygon points="747,346.1 763,356.1 747,366" fill="#fff" stroke="#444444" stroke-width="1.12" stroke-linejoin="miter"/>
<text transform="translate(745.3 362.2) rotate(-90)" x="0" y="0" font-size="5.19" textLength="12.4" lengthAdjust="spacingAndGlyphs" fill="#1e1e1e">5318</text>
<text x="748.2" y="357.9" font-size="5.19" textLength="7.9" lengthAdjust="spacingAndGlyphs" fill="#1e1e1e">PSD</text>
<line x1="763.4" y1="355.8" x2="770" y2="355.8" stroke="#444444" stroke-width="1.12" stroke-dasharray="2.2 2.8"/>
<circle cx="787.5" cy="371.6" r="9.6" fill="none" stroke="#444444" stroke-width="1.12"/>
<text x="784.9" y="370.6" font-size="6.14" textLength="6.2" lengthAdjust="spacingAndGlyphs" fill="#1e1e1e">XV</text>
<text x="782.4" y="377.9" font-size="5.9" textLength="11.2" lengthAdjust="spacingAndGlyphs" fill="#1e1e1e">1011</text>
<text x="771.6" y="367.8" font-size="6.14" textLength="5.8" lengthAdjust="spacingAndGlyphs" fill="#1e1e1e">23</text>
<rect x="768.7" y="359.8" width="23.8" height="18.2" rx="2.2" fill="none" stroke="#c364d6" stroke-width="2.1"/>
<text x="795.4" y="386.5" font-size="6.14" textLength="13" lengthAdjust="spacingAndGlyphs" fill="#1e1e1e">XV10</text>
<text x="786" y="392" font-size="6.14" textLength="22" lengthAdjust="spacingAndGlyphs" fill="#1e1e1e">NOTE  11</text>
<line x1="794" y1="395.3" x2="818" y2="395.3" stroke="#444444" stroke-width="1.5"/>
<polygon points="821.4,395.3 816.4,393.4 816.4,397.2" fill="#1e1e1e" stroke="#1e1e1e" stroke-width="0.3" stroke-linejoin="miter"/>
<line x1="821.2" y1="395.3" x2="821.2" y2="484" stroke="#444444" stroke-width="1.5"/>
<polygon points="821.2,487.6 819.3,482.6 823.1,482.6" fill="#1e1e1e" stroke="#1e1e1e" stroke-width="0.3" stroke-linejoin="miter"/>
<circle cx="787.5" cy="466" r="9.6" fill="none" stroke="#444444" stroke-width="1.12"/>
<text x="798.7" y="473.2" font-size="6.14" textLength="12.5" lengthAdjust="spacingAndGlyphs" fill="#1e1e1e">XV10</text>
<line x1="93" y1="488.2" x2="127.4" y2="488.2" stroke="#444444" stroke-width="1.5"/>
<path d="M83 486.4 H90.6 Q93.4 488.2 90.6 490 H83" fill="none" stroke="#444" stroke-width="1"/>
<rect x="127.4" y="483.2" width="35.5" height="11.2" fill="#fff" stroke="#444444" stroke-width="1.12" rx="2.2"/>
<path d="M128.4 483.6 q2 1.2 0 2.6 M161.3 494 q2 -1.2 0 -2.6" fill="none" stroke="#1e1e1e" stroke-width="0.7"/>
<text x="140.4" y="491.2" font-size="6.61" textLength="9.4" lengthAdjust="spacingAndGlyphs" fill="#1e1e1e">100</text>
<line x1="162.9" y1="488.2" x2="391" y2="488.2" stroke="#444444" stroke-width="1.5"/>
<polygon points="394.8,488.2 390.2,486.3 390.2,490.1" fill="#1e1e1e" stroke="#1e1e1e" stroke-width="0.3" stroke-linejoin="miter"/>
<line x1="394.6" y1="488.2" x2="394.6" y2="617.3" stroke="#444444" stroke-width="1.25"/>
<line x1="206.4" y1="488.2" x2="221.4" y2="488.2" stroke="#444444" stroke-width="1.12"/>
<line x1="208.4" y1="485.4" x2="208.4" y2="491" stroke="#444444" stroke-width="1.12"/>
<line x1="219.8" y1="485.4" x2="219.8" y2="491" stroke="#444444" stroke-width="1.12"/>
<line x1="214" y1="488.2" x2="214" y2="495.6" stroke="#444444" stroke-width="1.12"/>
<line x1="211.4" y1="495.6" x2="216.8" y2="495.6" stroke="#444444" stroke-width="1.12"/>
<text x="288.4" y="482.7" font-size="6.14" textLength="15.8" lengthAdjust="spacingAndGlyphs" fill="#1e1e1e">SLOPE</text>
<line x1="288.4" y1="485.5" x2="308.2" y2="485.5" stroke="#444444" stroke-width="1.12"/>
<polygon points="311.2,485.5 306.2,483.6 306.2,487.4" fill="#1e1e1e" stroke="#1e1e1e" stroke-width="0.3" stroke-linejoin="miter"/>
<line x1="147.9" y1="518.7" x2="201.6" y2="518.7" stroke="#444444" stroke-width="1.12" stroke-dasharray="2.2 2.8"/>
<rect x="201.6" y="509.2" width="26.2" height="19.5" fill="none" stroke="#444444" stroke-width="1.0"/>
<rect x="201.6" y="509.2" width="6.2" height="19.5" fill="none" stroke="#444444" stroke-width="1.0"/>
<line x1="201.6" y1="515.7" x2="207.8" y2="515.7" stroke="#444444" stroke-width="0.88"/>
<line x1="201.6" y1="522.2" x2="207.8" y2="522.2" stroke="#444444" stroke-width="0.88"/>
<text x="203.4" y="514.2" font-size="4.96" textLength="2.5" lengthAdjust="spacingAndGlyphs" fill="#1e1e1e">C</text>
<text x="203.4" y="520.7" font-size="4.96" textLength="2.5" lengthAdjust="spacingAndGlyphs" fill="#1e1e1e">H</text>
<text x="203.4" y="527.2" font-size="4.96" textLength="2.5" lengthAdjust="spacingAndGlyphs" fill="#1e1e1e">L</text>
<circle cx="217.6" cy="519.2" r="9.2" fill="none" stroke="#444444" stroke-width="1.12"/>
<text x="214.9" y="518.2" font-size="6.14" textLength="6.2" lengthAdjust="spacingAndGlyphs" fill="#1e1e1e">TI</text>
<text x="211.3" y="525.4" font-size="5.66" textLength="13.4" lengthAdjust="spacingAndGlyphs" fill="#1e1e1e">1012A</text>
<text x="194" y="514.6" font-size="6.14" textLength="5.8" lengthAdjust="spacingAndGlyphs" fill="#1e1e1e">23</text>
<rect x="191.8" y="508.2" width="33.7" height="18" rx="2.2" fill="none" stroke="#c364d6" stroke-width="2.1"/>
<text x="229.8" y="517.7" font-size="6.37" textLength="33.2" lengthAdjust="spacingAndGlyphs" fill="#1e1e1e">H=125deg  C</text>
<text x="229.8" y="524" font-size="6.37" textLength="30.2" lengthAdjust="spacingAndGlyphs" fill="#1e1e1e">L=25deg  C</text>
<line x1="263.6" y1="518.7" x2="288" y2="518.7" stroke="#444444" stroke-width="1.12" stroke-dasharray="2.2 2.8"/>
<circle cx="298" cy="518" r="9.7" fill="none" stroke="#444444" stroke-width="1.12"/>
<text x="295.3" y="517" font-size="6.14" textLength="6.2" lengthAdjust="spacingAndGlyphs" fill="#1e1e1e">TT</text>
<text x="291.7" y="524.4" font-size="5.66" textLength="13.4" lengthAdjust="spacingAndGlyphs" fill="#1e1e1e">1012A</text>
<text x="282.4" y="513" font-size="6.14" textLength="5.8" lengthAdjust="spacingAndGlyphs" fill="#1e1e1e">23</text>
<rect x="279.7" y="506.2" width="24.5" height="18.8" rx="2.2" fill="none" stroke="#c364d6" stroke-width="2.1"/>
<text x="310.2" y="516" font-size="6.37" textLength="20" lengthAdjust="spacingAndGlyphs" fill="#1e1e1e">NOTE  7</text>
<line x1="307.7" y1="518.7" x2="382" y2="518.7" stroke="#444444" stroke-width="1.12"/>
<line x1="382" y1="515.4" x2="382" y2="522" stroke="#444444" stroke-width="1.12"/>
<line x1="385.6" y1="515.4" x2="385.6" y2="522" stroke="#444444" stroke-width="1.12"/>
<line x1="385.6" y1="518.7" x2="394.6" y2="518.7" stroke="#444444" stroke-width="1.12"/>
<rect x="264.5" y="541.9" width="7.2" height="19.7" fill="#fff" stroke="#444444" stroke-width="1.0"/>
<polygon points="264.5,541.9 249.3,551.8 264.5,561.6" fill="#fff" stroke="#444444" stroke-width="1.12" stroke-linejoin="miter"/>
<text transform="translate(270 558) rotate(-90)" x="0" y="0" font-size="5.19" textLength="12.4" lengthAdjust="spacingAndGlyphs" fill="#1e1e1e">4355</text>
<text x="255.3" y="553.6" font-size="5.19" textLength="7.9" lengthAdjust="spacingAndGlyphs" fill="#1e1e1e">PSD</text>
<line x1="272" y1="551.6" x2="288" y2="551.6" stroke="#444444" stroke-width="1.12" stroke-dasharray="2.2 2.8"/>
<circle cx="298" cy="550.6" r="9.7" fill="none" stroke="#444444" stroke-width="1.12"/>
<text x="295.3" y="549.6" font-size="6.14" textLength="6.2" lengthAdjust="spacingAndGlyphs" fill="#1e1e1e">PS</text>
<text x="292.8" y="557.1" font-size="5.9" textLength="11.2" lengthAdjust="spacingAndGlyphs" fill="#1e1e1e">1014</text>
<text x="282.4" y="545.8" font-size="6.14" textLength="5.8" lengthAdjust="spacingAndGlyphs" fill="#1e1e1e">23</text>
<path d="M298 539.8 A11.2 11.2 0 0 1 309.2 551" fill="none" stroke="#1e1e1e" stroke-width="1.1"/>
<path d="M298 535.4 A15.6 15.6 0 0 1 313.6 551" fill="none" stroke="#1e1e1e" stroke-width="1.1"/>
<line x1="298" y1="541.3" x2="298" y2="535.4" stroke="#444444" stroke-width="1.0"/>
<line x1="302.3" y1="540.7" x2="304" y2="536.6" stroke="#444444" stroke-width="1.0"/>
<line x1="305.9" y1="543.1" x2="309" y2="540" stroke="#444444" stroke-width="1.0"/>
<line x1="308.3" y1="546.7" x2="312.4" y2="545" stroke="#444444" stroke-width="1.0"/>
<line x1="307.7" y1="551" x2="313.6" y2="551" stroke="#444444" stroke-width="1.0"/>
<rect x="279.2" y="538.6" width="24.2" height="20.5" rx="2.2" fill="none" stroke="#c364d6" stroke-width="2.1"/>
<text x="312.2" y="545.2" font-size="6.37" textLength="31.2" lengthAdjust="spacingAndGlyphs" fill="#1e1e1e">HH=32BARG</text>
<text x="313.4" y="561.7" font-size="6.37" textLength="35" lengthAdjust="spacingAndGlyphs" fill="#1e1e1e">LL=15.5BARG</text>
<line x1="307.7" y1="551.6" x2="382" y2="551.6" stroke="#444444" stroke-width="1.12"/>
<line x1="382" y1="548.4" x2="382" y2="555" stroke="#444444" stroke-width="1.12"/>
<line x1="385.6" y1="548.4" x2="385.6" y2="555" stroke="#444444" stroke-width="1.12"/>
<line x1="385.6" y1="551.6" x2="394.6" y2="551.6" stroke="#444444" stroke-width="1.12"/>
<text x="345" y="542.2" font-size="6.14" textLength="37" lengthAdjust="spacingAndGlyphs" fill="#1e1e1e">0075CBD030U</text>
<rect x="350.3" y="549.6" width="12.8" height="5.2" fill="#fff" stroke="#444444" stroke-width="1.0"/>
<line x1="350.3" y1="549.6" x2="363.1" y2="554.8" stroke="#444444" stroke-width="0.88"/>
<line x1="350.3" y1="554.8" x2="363.1" y2="549.6" stroke="#444444" stroke-width="0.88"/>
<rect x="363.1" y="549.6" width="12.9" height="5.2" fill="#fff" stroke="#444444" stroke-width="1.0"/>
<line x1="363.1" y1="549.6" x2="376" y2="554.8" stroke="#444444" stroke-width="0.88"/>
<line x1="363.1" y1="554.8" x2="376" y2="549.6" stroke="#444444" stroke-width="0.88"/>
<rect x="359.8" y="555.1" width="6.7" height="12.3" fill="#fff" stroke="#444444" stroke-width="1.0"/>
<line x1="359.8" y1="555.1" x2="366.5" y2="567.4" stroke="#444444" stroke-width="0.88"/>
<line x1="359.8" y1="567.4" x2="366.5" y2="555.1" stroke="#444444" stroke-width="0.88"/>
<line x1="359.6" y1="570.6" x2="366.6" y2="570.6" stroke="#444444" stroke-width="1.12"/>
<text x="346.7" y="548.3" font-size="6.61" textLength="30" lengthAdjust="spacingAndGlyphs" fill="#1e1e1e">23-V-0339</text>
<rect x="344.1" y="542.3" width="34.6" height="6.9" rx="2.2" fill="none" stroke="#c364d6" stroke-width="2.1"/>
<text x="369" y="562.3" font-size="6.37" textLength="6.8" lengthAdjust="spacingAndGlyphs" fill="#1e1e1e">LO</text>
<text transform="translate(404.2 541) rotate(-90)" x="0" y="0" font-size="6.14" textLength="15" lengthAdjust="spacingAndGlyphs" fill="#1e1e1e">SLOPE</text>
<line x1="407" y1="525" x2="407" y2="544.4" stroke="#444444" stroke-width="1.12"/>
<polygon points="407,547.6 405.1,542.6 408.9,542.6" fill="#1e1e1e" stroke="#1e1e1e" stroke-width="0.3" stroke-linejoin="miter"/>
<line x1="391.8" y1="563.6" x2="397.4" y2="563.6" stroke="#444444" stroke-width="1.12"/>
<line x1="391.8" y1="566" x2="397.4" y2="566" stroke="#444444" stroke-width="1.12"/>
<polygon points="391.4,576.2 393.1,583.4 396.1,583.4 397.8,576.2" fill="#fff" stroke="#444444" stroke-width="1.12" stroke-linejoin="miter"/>
<text transform="translate(404.9 597.3) rotate(-90)" x="0" y="0" font-size="5.9" textLength="29.9" lengthAdjust="spacingAndGlyphs" fill="#1e1e1e">1400X1800</text>
<polygon points="372.6,569.1 391.6,569.1 382.1,583" fill="#fff" stroke="#444444" stroke-width="1.12" stroke-linejoin="miter"/>
<line x1="382.1" y1="583" x2="391.6" y2="596.8" stroke="#444444" stroke-width="1.12"/>
<text x="378" y="575.5" font-size="5.19" textLength="7.3" lengthAdjust="spacingAndGlyphs" fill="#1e1e1e">HpL</text>
<text transform="translate(391.1 591) rotate(-90)" x="0" y="0" font-size="5.19" textLength="7" lengthAdjust="spacingAndGlyphs" fill="#1e1e1e">RS</text>
<text x="366.6" y="588.2" font-size="6.14" textLength="6.7" lengthAdjust="spacingAndGlyphs" fill="#1e1e1e">CC</text>
<line x1="370.8" y1="591" x2="370.8" y2="597.4" stroke="#444444" stroke-width="1.0"/>
<polygon points="370.8,589 369.3,592.2 372.3,592.2" fill="#1e1e1e" stroke="#1e1e1e" stroke-width="0.3" stroke-linejoin="miter"/>
<line x1="362" y1="597.8" x2="394.6" y2="597.8" stroke="#444444" stroke-width="1.12"/>
<circle cx="394.6" cy="597.8" r="1.6" fill="#fff" stroke="#444444" stroke-width="0.88"/>
<text x="378.3" y="604.7" font-size="6.14" textLength="12.5" lengthAdjust="spacingAndGlyphs" fill="#1e1e1e">N001</text>
<line x1="298.4" y1="597.8" x2="362" y2="597.8" stroke="#444444" stroke-width="1.12" stroke-dasharray="2.2 2.8"/>
<line x1="298.4" y1="597.8" x2="298.4" y2="686" stroke="#444444" stroke-width="1.12" stroke-dasharray="2.2 2.8"/>
<line x1="298.4" y1="686" x2="491.1" y2="686" stroke="#444444" stroke-width="1.12" stroke-dasharray="2.2 2.8"/>
<line x1="397.5" y1="597.6" x2="491.1" y2="597.6" stroke="#444444" stroke-width="1.12" stroke-dasharray="2.2 2.8"/>
<line x1="491.1" y1="597.6" x2="491.1" y2="686" stroke="#444444" stroke-width="1.12" stroke-dasharray="2.2 2.8"/>
<text x="304.4" y="608" font-size="8.4" textLength="42.1" lengthAdjust="spacingAndGlyphs" fill="#1e1e1e" style="stroke-width:.1px">23-KZ-103</text>
<rect x="301.4" y="599.8" width="47.5" height="10" rx="2.2" fill="none" stroke="#c364d6" stroke-width="2.1"/>
<line x1="424.4" y1="581" x2="424.4" y2="623.8" stroke="#444444" stroke-width="1.12"/>
<circle cx="424.4" cy="597.6" r="1.6" fill="#fff" stroke="#444444" stroke-width="0.88"/>
<line x1="420" y1="597.6" x2="442.6" y2="597.6" stroke="#444444" stroke-width="1.12"/>
<text transform="translate(421.5 593.4) rotate(-90)" x="0" y="0" font-size="5.19" textLength="7" lengthAdjust="spacingAndGlyphs" fill="#1e1e1e">RS</text>
<text transform="translate(433.4 595) rotate(-90)" x="0" y="0" font-size="5.66" textLength="12.4" lengthAdjust="spacingAndGlyphs" fill="#1e1e1e">1000</text>
<text x="435.7" y="587.9" font-size="6.14" textLength="6.7" lengthAdjust="spacingAndGlyphs" fill="#1e1e1e">CC</text>
<line x1="438.7" y1="591" x2="438.7" y2="597.4" stroke="#444444" stroke-width="1.0"/>
<polygon points="438.7,589 437.2,592.2 440.2,592.2" fill="#1e1e1e" stroke="#1e1e1e" stroke-width="0.3" stroke-linejoin="miter"/>
<text x="427" y="604.7" font-size="6.14" textLength="13.7" lengthAdjust="spacingAndGlyphs" fill="#1e1e1e">N002</text>
<polygon points="384.5,617 432.4,625.4 432.4,645.6 384.5,657.9" fill="#fff" stroke="#444444" stroke-width="1.12" stroke-linejoin="miter"/>
<text x="386.7" y="637.5" font-size="8.4" textLength="42.1" lengthAdjust="spacingAndGlyphs" fill="#1e1e1e" style="stroke-width:.1px">23-KA-103</text>
<rect x="383.7" y="628.7" width="47.5" height="11.2" rx="2.2" fill="none" stroke="#c364d6" stroke-width="2.1"/>
<line x1="154.9" y1="635.5" x2="349.6" y2="635.5" stroke="#444444" stroke-width="1.12"/>
<rect x="349.6" y="628.5" width="25" height="13.8" fill="#fff" stroke="#444444" stroke-width="1.12"/>
<text x="359.9" y="638.3" font-size="7.55" textLength="4.5" lengthAdjust="spacingAndGlyphs" fill="#1e1e1e">M</text>
<line x1="374.6" y1="635.5" x2="384.5" y2="635.5" stroke="#444444" stroke-width="1.12"/>
<line x1="83" y1="635.5" x2="128.7" y2="635.5" stroke="#444444" stroke-width="1.12" stroke-dasharray="2.2 2.8"/>
<polygon points="128.7,635.5 125.7,634.1 125.7,636.9" fill="#1e1e1e" stroke="#1e1e1e" stroke-width="0.3" stroke-linejoin="miter"/>
<rect x="128.7" y="626" width="26.2" height="19.5" fill="none" stroke="#444444" stroke-width="1.0"/>
<rect x="128.7" y="626" width="6.1" height="19.5" fill="none" stroke="#444444" stroke-width="1.0"/>
<line x1="128.7" y1="630.9" x2="134.8" y2="630.9" stroke="#444444" stroke-width="0.88"/>
<line x1="128.7" y1="635.8" x2="134.8" y2="635.8" stroke="#444444" stroke-width="0.88"/>
<line x1="128.7" y1="640.6" x2="134.8" y2="640.6" stroke="#444444" stroke-width="0.88"/>
<text x="130.5" y="630.2" font-size="4.96" textLength="2.5" lengthAdjust="spacingAndGlyphs" fill="#1e1e1e">V</text>
<text x="130.5" y="635.1" font-size="4.96" textLength="2.5" lengthAdjust="spacingAndGlyphs" fill="#1e1e1e">A</text>
<text x="130.5" y="640" font-size="4.96" textLength="2.5" lengthAdjust="spacingAndGlyphs" fill="#1e1e1e">S</text>
<text x="130.5" y="644.8" font-size="4.96" textLength="2.5" lengthAdjust="spacingAndGlyphs" fill="#1e1e1e">D</text>
<circle cx="144.6" cy="635.7" r="9.2" fill="none" stroke="#444444" stroke-width="1.12"/>
<text x="140.5" y="634.5" font-size="5.9" textLength="9" lengthAdjust="spacingAndGlyphs" fill="#1e1e1e">SIC</text>
<text x="139.4" y="641.9" font-size="5.9" textLength="11.2" lengthAdjust="spacingAndGlyphs" fill="#1e1e1e">1012</text>
<text x="121" y="631.5" font-size="6.14" textLength="5.8" lengthAdjust="spacingAndGlyphs" fill="#1e1e1e">23</text>
<rect x="249.3" y="644.3" width="7.2" height="19.9" fill="#fff" stroke="#444444" stroke-width="1.0"/>
<polygon points="256.5,644.3 271.7,654.2 256.5,664.2" fill="#fff" stroke="#444444" stroke-width="1.12" stroke-linejoin="miter"/>
<text transform="translate(254.8 660.5) rotate(-90)" x="0" y="0" font-size="5.19" textLength="12.4" lengthAdjust="spacingAndGlyphs" fill="#1e1e1e">4357</text>
<text x="257.7" y="656.1" font-size="5.19" textLength="7.9" lengthAdjust="spacingAndGlyphs" fill="#1e1e1e">PSD</text>
<line x1="272" y1="654" x2="355" y2="654" stroke="#444444" stroke-width="1.12" stroke-dasharray="2.2 2.8"/>
<line x1="355" y1="642.3" x2="355" y2="654" stroke="#444444" stroke-width="1.12" stroke-dasharray="2.2 2.8"/>
<rect x="249.3" y="669.7" width="7.2" height="20" fill="#fff" stroke="#444444" stroke-width="1.0"/>
<polygon points="256.5,669.7 271.7,679.7 256.5,689.7" fill="#fff" stroke="#444444" stroke-width="1.12" stroke-linejoin="miter"/>
<text transform="translate(254.8 682.8) rotate(-90)" x="0" y="0" font-size="5.19" textLength="6.2" lengthAdjust="spacingAndGlyphs" fill="#1e1e1e">22</text>
<text x="257.7" y="681.6" font-size="5.19" textLength="7.9" lengthAdjust="spacingAndGlyphs" fill="#1e1e1e">ESD</text>
<line x1="272" y1="679.2" x2="367.1" y2="679.2" stroke="#444444" stroke-width="1.12" stroke-dasharray="2.2 2.8"/>
<line x1="367.1" y1="642.3" x2="367.1" y2="679.2" stroke="#444444" stroke-width="1.12" stroke-dasharray="2.2 2.8"/>
<text x="268.5" y="688.3" font-size="6.37" textLength="22.9" lengthAdjust="spacingAndGlyphs" fill="#1e1e1e">NOTE  22</text>
<text x="498" y="684.5" font-size="6.14" textLength="29.3" lengthAdjust="spacingAndGlyphs" fill="#1e1e1e">EL.  35.400</text>
<line x1="498" y1="686" x2="534.8" y2="686" stroke="#444444" stroke-width="1.0"/>
<text x="84.7" y="714.6" font-size="5.66" textLength="13.3" lengthAdjust="spacingAndGlyphs" fill="#1e1e1e">STOP</text>
<text x="82.4" y="721.9" font-size="5.66" textLength="14.1" lengthAdjust="spacingAndGlyphs" fill="#1e1e1e">0108</text>
<rect x="80" y="716.3" width="18.3" height="6.8" rx="2.2" fill="none" stroke="#c364d6" stroke-width="2.1"/>
<text x="82.6" y="609.7" font-size="5.9" textLength="1.6" lengthAdjust="spacingAndGlyphs" fill="#1e1e1e">.</text>
<line x1="794.7" y1="488.5" x2="906" y2="488.5" stroke="#444444" stroke-width="1.5"/>
<line x1="916" y1="488.5" x2="974" y2="488.5" stroke="#444444" stroke-width="1.5"/>
<line x1="829.1" y1="488.5" x2="829.1" y2="516" stroke="#444444" stroke-width="1.12"/>
<line x1="869" y1="488.5" x2="869" y2="516" stroke="#444444" stroke-width="1.12"/>
<path d="M850.4 516 V488 q0.2 -4.6 4 -5.2 q1.6 -1.8 3.4 0 q1.8 -1.8 3.6 0 q1.8 -1.8 3.6 0 q1.8 -1.8 3.6 0 q1.8 -1.8 3.4 0 q3.8 0.8 3.8 5.2 q1.6 1.6 0 3.4 q1.6 1.8 0 3.6 q1.6 1.8 0 3.6 q1.6 1.8 0 3.4 q1 2.6 3.4 2.4 q1.6 -1.8 3.4 0 q1.8 -1.8 3.6 0 q1.8 -1.8 3.6 0 q3.4 1.2 4.2 6" fill="none" stroke="#1e1e1e" stroke-width="0.9"/>
<text transform="translate(859.3 510) rotate(-90)" x="0" y="0" font-size="5.19" textLength="11" lengthAdjust="spacingAndGlyphs" fill="#1e1e1e">0209</text>
<text transform="translate(865 515.6) rotate(-90)" x="0" y="0" font-size="5.9" textLength="10.8" lengthAdjust="spacingAndGlyphs" fill="#1e1e1e"></text>
<rect x="858.8" y="502.4" width="8.2" height="15.6" rx="2.2" fill="none" stroke="#c364d6" stroke-width="2.1"/>
<polygon points="868,509 872.4,509 870.2,514.4" fill="#fff" stroke="#444444" stroke-width="1.0" stroke-linejoin="miter"/>
<text x="895.1" y="480.7" font-size="6.61" textLength="31.7" lengthAdjust="spacingAndGlyphs" fill="#1e1e1e">23-V-0208</text>
<rect x="892.5" y="473.2" width="36.3" height="9.8" rx="2.2" fill="none" stroke="#c364d6" stroke-width="2.1"/>
<circle cx="911" cy="488.5" r="3.9" fill="#fff" stroke="#444444" stroke-width="1.12"/>
<line x1="904.8" y1="483.9" x2="904.8" y2="493.1" stroke="#444444" stroke-width="1.0"/>
<line x1="906.8" y1="483.9" x2="906.8" y2="493.1" stroke="#444444" stroke-width="1.0"/>
<line x1="915.2" y1="483.9" x2="915.2" y2="493.1" stroke="#444444" stroke-width="1.0"/>
<line x1="917.2" y1="483.9" x2="917.2" y2="493.1" stroke="#444444" stroke-width="1.0"/>
<text x="896.6" y="499.7" font-size="6.37" textLength="34.8" lengthAdjust="spacingAndGlyphs" fill="#1e1e1e">1400BLED50J</text>
<text x="938.2" y="482.1" font-size="6.14" textLength="15.8" lengthAdjust="spacingAndGlyphs" fill="#1e1e1e">SLOPE</text>
<line x1="938.2" y1="485" x2="958.2" y2="485" stroke="#444444" stroke-width="1.12"/>
<polygon points="961.2,485 956.2,483.1 956.2,486.9" fill="#1e1e1e" stroke="#1e1e1e" stroke-width="0.3" stroke-linejoin="miter"/>
<text x="978" y="480.7" font-size="6.14" textLength="60.2" lengthAdjust="spacingAndGlyphs" fill="#1e1e1e">TO  WET  GAS  COOLERS</text>
<text x="977.6" y="491.8" font-size="10" textLength="52.4" lengthAdjust="spacingAndGlyphs" fill="#3a3a3a" style="stroke-width:.1px">XB-2035-001</text>
<rect x="974.6" y="482.9" width="57.6" height="10.2" rx="2.5" fill="#e8894a" fill-opacity="0.0" stroke="#df8843" stroke-width="2.5"/>
<text x="938.1" y="501.4" font-size="6.14" textLength="91.6" lengthAdjust="spacingAndGlyphs" fill="#1e1e1e">1400A-PV-23-L-0057-ED20-56</text>
<rect x="935.5" y="494.6" width="96.2" height="8.8" rx="2.2" fill="none" stroke="#c364d6" stroke-width="2.1"/>
<circle cx="763" cy="582" r="8.6" fill="none" stroke="#444444" stroke-width="1.12"/>
<text x="758.2" y="586.6" font-size="5.43" textLength="10.3" lengthAdjust="spacingAndGlyphs" fill="#1e1e1e">1011</text>
<rect x="747" y="574" width="25.8" height="14.4" rx="2.2" fill="none" stroke="#c364d6" stroke-width="2.1"/>
<line x1="83" y1="777.4" x2="1048.6" y2="777.4" stroke="#2e2e2e" stroke-width="1.5"/>
<line x1="83" y1="872.3" x2="1048.6" y2="872.3" stroke="#2e2e2e" stroke-width="1.5"/>
<line x1="83" y1="793.2" x2="342.6" y2="793.2" stroke="#2e2e2e" stroke-width="1.5"/>
<line x1="83" y1="807" x2="342.6" y2="807" stroke="#2e2e2e" stroke-width="1.5"/>
<line x1="83" y1="820" x2="342.6" y2="820" stroke="#2e2e2e" stroke-width="1.5"/>
<line x1="83" y1="833.2" x2="342.6" y2="833.2" stroke="#2e2e2e" stroke-width="1.5"/>
<line x1="83" y1="846.1" x2="342.6" y2="846.1" stroke="#2e2e2e" stroke-width="1.5"/>
<line x1="83" y1="859.1" x2="342.6" y2="859.1" stroke="#2e2e2e" stroke-width="1.5"/>
<line x1="86.7" y1="777.4" x2="86.7" y2="872.3" stroke="#2e2e2e" stroke-width="1.5"/>
<line x1="217.8" y1="777.4" x2="217.8" y2="872.3" stroke="#2e2e2e" stroke-width="1.5"/>
<line x1="247.8" y1="777.4" x2="247.8" y2="872.3" stroke="#2e2e2e" stroke-width="1.5"/>
<line x1="266.7" y1="777.4" x2="266.7" y2="872.3" stroke="#2e2e2e" stroke-width="1.5"/>
<line x1="285.5" y1="777.4" x2="285.5" y2="872.3" stroke="#2e2e2e" stroke-width="1.5"/>
<line x1="304.7" y1="777.4" x2="304.7" y2="872.3" stroke="#2e2e2e" stroke-width="1.5"/>
<line x1="323.4" y1="777.4" x2="323.4" y2="872.3" stroke="#2e2e2e" stroke-width="1.5"/>
<line x1="342.6" y1="777.4" x2="342.6" y2="872.3" stroke="#2e2e2e" stroke-width="1.5"/>
<text x="96.9" y="788.7" font-size="5.43" textLength="62.2" lengthAdjust="spacingAndGlyphs" fill="#1e1e1e" font-weight="bold">DESCRIPTION OF REVISION</text>
<text x="225.5" y="784.1" font-size="5.31" textLength="13.1" lengthAdjust="spacingAndGlyphs" fill="#1e1e1e" font-weight="bold">ISSUE</text>
<text x="226.8" y="790.8" font-size="5.31" textLength="10.4" lengthAdjust="spacingAndGlyphs" fill="#1e1e1e" font-weight="bold">DATE</text>
<text x="251.7" y="784.1" font-size="5.31" textLength="10.4" lengthAdjust="spacingAndGlyphs" fill="#1e1e1e" font-weight="bold">MADE</text>
<text x="254.3" y="790.8" font-size="5.31" textLength="5.2" lengthAdjust="spacingAndGlyphs" fill="#1e1e1e" font-weight="bold">BY</text>
<text x="269.5" y="784.1" font-size="5.31" textLength="13" lengthAdjust="spacingAndGlyphs" fill="#1e1e1e" font-weight="bold">CHK'D</text>
<text x="273.4" y="790.8" font-size="5.31" textLength="5.2" lengthAdjust="spacingAndGlyphs" fill="#1e1e1e" font-weight="bold">BY</text>
<text x="289.6" y="784.1" font-size="5.31" textLength="10.4" lengthAdjust="spacingAndGlyphs" fill="#1e1e1e" font-weight="bold">DISC</text>
<text x="289.6" y="790.8" font-size="5.31" textLength="10.4" lengthAdjust="spacingAndGlyphs" fill="#1e1e1e" font-weight="bold">APPR</text>
<text x="308.4" y="784.1" font-size="5.31" textLength="10.4" lengthAdjust="spacingAndGlyphs" fill="#1e1e1e" font-weight="bold">PROJ</text>
<text x="308.4" y="790.8" font-size="5.31" textLength="10.4" lengthAdjust="spacingAndGlyphs" fill="#1e1e1e" font-weight="bold">APPR</text>
<text x="325" y="784.1" font-size="5.31" textLength="15.7" lengthAdjust="spacingAndGlyphs" fill="#1e1e1e" font-weight="bold">CLIENT</text>
<text x="327.6" y="790.8" font-size="5.31" textLength="10.4" lengthAdjust="spacingAndGlyphs" fill="#1e1e1e" font-weight="bold">APPR</text>
<text x="94.9" y="803.3" font-size="7.32" textLength="60.7" lengthAdjust="spacingAndGlyphs" fill="#1e1e1e">REISSUED AS-BUILT</text>
<text x="220" y="803.3" font-size="7.32" textLength="25.3" lengthAdjust="spacingAndGlyphs" fill="#1e1e1e">04.09.13</text>
<text x="252.9" y="803.3" font-size="7.32" textLength="7.7" lengthAdjust="spacingAndGlyphs" fill="#1e1e1e">ML</text>
<text x="272" y="803.3" font-size="7.32" textLength="7.7" lengthAdjust="spacingAndGlyphs" fill="#1e1e1e">NK</text>
<text x="291" y="803.3" font-size="7.32" textLength="7.7" lengthAdjust="spacingAndGlyphs" fill="#1e1e1e">JJ</text>
<text x="309.4" y="803.3" font-size="7.32" textLength="7.7" lengthAdjust="spacingAndGlyphs" fill="#1e1e1e">RO</text>
<text x="94.9" y="817" font-size="7.32" textLength="60.7" lengthAdjust="spacingAndGlyphs" fill="#1e1e1e">REISSUED AS-BUILT</text>
<text x="220" y="817" font-size="7.32" textLength="25.3" lengthAdjust="spacingAndGlyphs" fill="#1e1e1e">15.12.11</text>
<text x="252.9" y="817" font-size="7.32" textLength="7.7" lengthAdjust="spacingAndGlyphs" fill="#1e1e1e">MA</text>
<text x="272" y="817" font-size="7.32" textLength="7.7" lengthAdjust="spacingAndGlyphs" fill="#1e1e1e">GK</text>
<text x="291" y="817" font-size="7.32" textLength="7.7" lengthAdjust="spacingAndGlyphs" fill="#1e1e1e">MA</text>
<text x="309.4" y="817" font-size="7.32" textLength="7.7" lengthAdjust="spacingAndGlyphs" fill="#1e1e1e">LL</text>
<text x="94.9" y="830" font-size="7.32" textLength="72" lengthAdjust="spacingAndGlyphs" fill="#1e1e1e">AS BUILT, REACT-2495</text>
<text x="220" y="830" font-size="7.32" textLength="25.3" lengthAdjust="spacingAndGlyphs" fill="#1e1e1e">13.01.23</text>
<text x="250.9" y="830" font-size="7.32" textLength="11.5" lengthAdjust="spacingAndGlyphs" fill="#1e1e1e">ARP</text>
<text x="272" y="830" font-size="7.32" textLength="7.7" lengthAdjust="spacingAndGlyphs" fill="#1e1e1e">AM</text>
<text x="328.2" y="830" font-size="7.32" textLength="7.7" lengthAdjust="spacingAndGlyphs" fill="#1e1e1e">DR</text>
<text x="94.9" y="843" font-size="7.32" textLength="60.7" lengthAdjust="spacingAndGlyphs" fill="#1e1e1e">AS-BUILT, 7004468</text>
<text x="220" y="843" font-size="7.32" textLength="25.3" lengthAdjust="spacingAndGlyphs" fill="#1e1e1e">20.12.22</text>
<text x="252.9" y="843" font-size="7.32" textLength="7.7" lengthAdjust="spacingAndGlyphs" fill="#1e1e1e">LT</text>
<text x="270" y="843" font-size="7.32" textLength="11.5" lengthAdjust="spacingAndGlyphs" fill="#1e1e1e">RJB</text>
<text x="289" y="843" font-size="7.32" textLength="11.5" lengthAdjust="spacingAndGlyphs" fill="#1e1e1e">RJB</text>
<text x="328.2" y="843" font-size="7.32" textLength="7.7" lengthAdjust="spacingAndGlyphs" fill="#1e1e1e">DR</text>
<text x="94.9" y="855.5" font-size="7.32" textLength="63.7" lengthAdjust="spacingAndGlyphs" fill="#1e1e1e">AS BUILT MW-57299</text>
<text x="220" y="855.5" font-size="7.32" textLength="25.3" lengthAdjust="spacingAndGlyphs" fill="#1e1e1e">08.10.21</text>
<text x="250.9" y="855.5" font-size="7.32" textLength="11.5" lengthAdjust="spacingAndGlyphs" fill="#1e1e1e">ARS</text>
<text x="272" y="855.5" font-size="7.32" textLength="7.7" lengthAdjust="spacingAndGlyphs" fill="#1e1e1e">AM</text>
<text x="328.2" y="855.5" font-size="7.32" textLength="7.7" lengthAdjust="spacingAndGlyphs" fill="#1e1e1e">KR</text>
<text x="94.9" y="868.7" font-size="7.32" textLength="60.7" lengthAdjust="spacingAndGlyphs" fill="#1e1e1e">AS BUILT MW 46311</text>
<text x="220" y="868.7" font-size="7.32" textLength="25.3" lengthAdjust="spacingAndGlyphs" fill="#1e1e1e">28.03.19</text>
<text x="250.9" y="868.7" font-size="7.32" textLength="11.5" lengthAdjust="spacingAndGlyphs" fill="#1e1e1e">KAS</text>
<text x="272" y="868.7" font-size="7.32" textLength="7.7" lengthAdjust="spacingAndGlyphs" fill="#1e1e1e">MM</text>
<text x="326.2" y="868.7" font-size="7.32" textLength="11.5" lengthAdjust="spacingAndGlyphs" fill="#1e1e1e">OHS</text>
<line x1="492.3" y1="777.4" x2="492.3" y2="872.3" stroke="#2e2e2e" stroke-width="1.5"/>
<line x1="342.6" y1="825.4" x2="492.3" y2="825.4" stroke="#2e2e2e" stroke-width="1.5"/>
<path d="M399 816.9 L399.2 815.6 C402 812.5 405 810.5 408 808.8 C410.5 807 412.5 805.6 414.5 804.6 L418 803.4 L425 805 C428 806.5 430.5 808 432 809.6 C434 812 435.3 814 435.8 816.9 Z" fill="#0d0d0d" stroke="#0d0d0d" stroke-width="0.5" stroke-linejoin="round"/>
<path d="M401.3 787.3 L403.5 785.6 C405 784.2 407.6 783.8 409.2 785 C410.6 786.2 410.6 788.4 409.4 790 C408.4 791.4 408.4 792.6 409.6 793.8 L415.4 798.4 L416.2 803.4 L411.6 806 C408 802 405.6 798 404.9 794.4 C404.4 791.4 405.6 789.2 406.8 787.8 L401.7 788.2 Z" fill="#0d0d0d" stroke="#0d0d0d" stroke-width="0.5" stroke-linejoin="round"/>
<path d="M406.7 791.4 L408 793 L415.3 800.4 L415.6 803.4 L408.6 796.8 C407.4 795 406.8 793.2 406.7 791.4 Z" fill="#fff"/>
<path d="M415.9 781.3 L419 779.6 C421 778.4 423.8 778.6 424.8 780.6 C425.6 782.2 424.8 784 424.6 786 C424.5 788 425 789.4 425 790.6 C424.4 793.6 421 795.6 419.4 797.6 C418 799.6 417.6 802 417.4 804.8 L415.9 804.2 C415.7 800.6 416.6 797.4 418.4 795 C420.4 792.4 423 790.8 423.2 788.2 C423.4 786 422.6 784 422.4 782.4 L416 782.5 Z" fill="#0d0d0d" stroke="#0d0d0d" stroke-width="0.5" stroke-linejoin="round"/>
<path d="M426.2 790.4 C427.6 793.6 427.4 797 425.6 800.4 L423.4 805 L421.4 804.4 L424 799.6 C425.6 796.4 426 793.4 425.6 790.8 Z" fill="#0d0d0d" stroke="#0d0d0d" stroke-width="0.5" stroke-linejoin="round"/>
<path d="M418.4 799.8 L422.6 798 L422 799.8 L418.2 801.8 Z" fill="#0d0d0d" stroke="#0d0d0d" stroke-width="0.5" stroke-linejoin="round"/>
<text style="stroke-width:.5px" x="399" y="824.1" font-size="7.32" textLength="36.6" lengthAdjust="spacingAndGlyphs" fill="#1e1e1e" font-weight="bold" font-style="italic">S K A R V</text>
<rect x="355.5" y="840.4" width="16.2" height="16.5" fill="#222" stroke="#222" stroke-width="0.1"/>
<text x="377.5" y="856.5" font-size="16.8" fill="#1b1b1b" textLength="99" lengthAdjust="spacingAndGlyphs"><tspan font-weight="bold">Aker</tspan><tspan style="stroke-width:.45px">Solutions</tspan></text>
<line x1="474.3" y1="847.6" x2="477.6" y2="847.6" stroke="#444444" stroke-width="1.5"/>
<line x1="573" y1="777.4" x2="573" y2="872.3" stroke="#2e2e2e" stroke-width="1.5"/>
<line x1="763.7" y1="777.4" x2="763.7" y2="872.3" stroke="#2e2e2e" stroke-width="1.5"/>
<line x1="492.3" y1="786.7" x2="763.7" y2="786.7" stroke="#2e2e2e" stroke-width="1.5"/>
<line x1="492.3" y1="796.7" x2="763.7" y2="796.7" stroke="#2e2e2e" stroke-width="1.5"/>
<line x1="492.3" y1="806.2" x2="763.7" y2="806.2" stroke="#2e2e2e" stroke-width="1.5"/>
<line x1="492.3" y1="815.4" x2="763.7" y2="815.4" stroke="#2e2e2e" stroke-width="1.5"/>
<line x1="492.3" y1="825.4" x2="763.7" y2="825.4" stroke="#2e2e2e" stroke-width="1.5"/>
<line x1="492.3" y1="834.4" x2="763.7" y2="834.4" stroke="#2e2e2e" stroke-width="1.5"/>
<line x1="492.3" y1="844.1" x2="763.7" y2="844.1" stroke="#2e2e2e" stroke-width="1.5"/>
<line x1="492.3" y1="853.6" x2="763.7" y2="853.6" stroke="#2e2e2e" stroke-width="1.5"/>
<line x1="492.3" y1="862.4" x2="763.7" y2="862.4" stroke="#2e2e2e" stroke-width="1.5"/>
<text x="514.8" y="784.3" font-size="5.19" textLength="32.9" lengthAdjust="spacingAndGlyphs" fill="#1e1e1e" font-weight="bold">REF  DWG  No</text>
<text x="644.6" y="784.3" font-size="5.19" textLength="49.4" lengthAdjust="spacingAndGlyphs" fill="#1e1e1e" font-weight="bold">REF  DRAWING  TITLE</text>
<line x1="863.6" y1="777.4" x2="863.6" y2="872.3" stroke="#2e2e2e" stroke-width="1.5"/>
<line x1="763.7" y1="832.9" x2="1048.6" y2="832.9" stroke="#2e2e2e" stroke-width="1.5"/>
<line x1="763.7" y1="844.1" x2="1012.1" y2="844.1" stroke="#2e2e2e" stroke-width="1.5"/>
<line x1="1012.1" y1="832.9" x2="1012.1" y2="872.3" stroke="#2e2e2e" stroke-width="1.5"/>
<line x1="1012.1" y1="852.9" x2="1048.6" y2="852.9" stroke="#2e2e2e" stroke-width="1.5"/>
<path transform="translate(799.2 806.7) rotate(0)" d="M0 -17.9 Q4.3 -13.7 0 -9.2 Q-4.3 -13.7 0 -17.9 Z" fill="#0e0e0e" stroke="#fff" stroke-width="0.22"/>
<path transform="translate(799.2 806.7) rotate(20)" d="M0 -17.9 Q4.3 -13.7 0 -9.2 Q-4.3 -13.7 0 -17.9 Z" fill="#0e0e0e" stroke="#fff" stroke-width="0.22"/>
<path transform="translate(799.2 806.7) rotate(40)" d="M0 -17.9 Q4.3 -13.7 0 -9.2 Q-4.3 -13.7 0 -17.9 Z" fill="#0e0e0e" stroke="#fff" stroke-width="0.22"/>
<path transform="translate(799.2 806.7) rotate(60)" d="M0 -17.9 Q4.3 -13.7 0 -9.2 Q-4.3 -13.7 0 -17.9 Z" fill="#0e0e0e" stroke="#fff" stroke-width="0.22"/>
<path transform="translate(799.2 806.7) rotate(80)" d="M0 -17.9 Q4.3 -13.7 0 -9.2 Q-4.3 -13.7 0 -17.9 Z" fill="#0e0e0e" stroke="#fff" stroke-width="0.22"/>
<path transform="translate(799.2 806.7) rotate(100)" d="M0 -17.9 Q4.3 -13.7 0 -9.2 Q-4.3 -13.7 0 -17.9 Z" fill="#0e0e0e" stroke="#fff" stroke-width="0.22"/>
<path transform="translate(799.2 806.7) rotate(120)" d="M0 -17.9 Q4.3 -13.7 0 -9.2 Q-4.3 -13.7 0 -17.9 Z" fill="#0e0e0e" stroke="#fff" stroke-width="0.22"/>
<path transform="translate(799.2 806.7) rotate(140)" d="M0 -17.9 Q4.3 -13.7 0 -9.2 Q-4.3 -13.7 0 -17.9 Z" fill="#0e0e0e" stroke="#fff" stroke-width="0.22"/>
<path transform="translate(799.2 806.7) rotate(160)" d="M0 -17.9 Q4.3 -13.7 0 -9.2 Q-4.3 -13.7 0 -17.9 Z" fill="#0e0e0e" stroke="#fff" stroke-width="0.22"/>
<path transform="translate(799.2 806.7) rotate(180)" d="M0 -17.9 Q4.3 -13.7 0 -9.2 Q-4.3 -13.7 0 -17.9 Z" fill="#0e0e0e" stroke="#fff" stroke-width="0.22"/>
<path transform="translate(799.2 806.7) rotate(200)" d="M0 -17.9 Q4.3 -13.7 0 -9.2 Q-4.3 -13.7 0 -17.9 Z" fill="#0e0e0e" stroke="#fff" stroke-width="0.22"/>
<path transform="translate(799.2 806.7) rotate(220)" d="M0 -17.9 Q4.3 -13.7 0 -9.2 Q-4.3 -13.7 0 -17.9 Z" fill="#0e0e0e" stroke="#fff" stroke-width="0.22"/>
<path transform="translate(799.2 806.7) rotate(240)" d="M0 -17.9 Q4.3 -13.7 0 -9.2 Q-4.3 -13.7 0 -17.9 Z" fill="#0e0e0e" stroke="#fff" stroke-width="0.22"/>
<path transform="translate(799.2 806.7) rotate(260)" d="M0 -17.9 Q4.3 -13.7 0 -9.2 Q-4.3 -13.7 0 -17.9 Z" fill="#0e0e0e" stroke="#fff" stroke-width="0.22"/>
<path transform="translate(799.2 806.7) rotate(280)" d="M0 -17.9 Q4.3 -13.7 0 -9.2 Q-4.3 -13.7 0 -17.9 Z" fill="#0e0e0e" stroke="#fff" stroke-width="0.22"/>
<path transform="translate(799.2 806.7) rotate(300)" d="M0 -17.9 Q4.3 -13.7 0 -9.2 Q-4.3 -13.7 0 -17.9 Z" fill="#0e0e0e" stroke="#fff" stroke-width="0.22"/>
<path transform="translate(799.2 806.7) rotate(320)" d="M0 -17.9 Q4.3 -13.7 0 -9.2 Q-4.3 -13.7 0 -17.9 Z" fill="#0e0e0e" stroke="#fff" stroke-width="0.22"/>
<path transform="translate(799.2 806.7) rotate(340)" d="M0 -17.9 Q4.3 -13.7 0 -9.2 Q-4.3 -13.7 0 -17.9 Z" fill="#0e0e0e" stroke="#fff" stroke-width="0.22"/>
<path transform="translate(799.2 806.7) rotate(10)" d="M0 -14.2 Q3.8 -10.7 0 -7 Q-3.8 -10.7 0 -14.2 Z" fill="#0e0e0e" stroke="#fff" stroke-width="0.22"/>
<path transform="translate(799.2 806.7) rotate(30)" d="M0 -14.2 Q3.8 -10.7 0 -7 Q-3.8 -10.7 0 -14.2 Z" fill="#0e0e0e" stroke="#fff" stroke-width="0.22"/>
<path transform="translate(799.2 806.7) rotate(50)" d="M0 -14.2 Q3.8 -10.7 0 -7 Q-3.8 -10.7 0 -14.2 Z" fill="#0e0e0e" stroke="#fff" stroke-width="0.22"/>
<path transform="translate(799.2 806.7) rotate(70)" d="M0 -14.2 Q3.8 -10.7 0 -7 Q-3.8 -10.7 0 -14.2 Z" fill="#0e0e0e" stroke="#fff" stroke-width="0.22"/>
<path transform="translate(799.2 806.7) rotate(90)" d="M0 -14.2 Q3.8 -10.7 0 -7 Q-3.8 -10.7 0 -14.2 Z" fill="#0e0e0e" stroke="#fff" stroke-width="0.22"/>
<path transform="translate(799.2 806.7) rotate(110)" d="M0 -14.2 Q3.8 -10.7 0 -7 Q-3.8 -10.7 0 -14.2 Z" fill="#0e0e0e" stroke="#fff" stroke-width="0.22"/>
<path transform="translate(799.2 806.7) rotate(130)" d="M0 -14.2 Q3.8 -10.7 0 -7 Q-3.8 -10.7 0 -14.2 Z" fill="#0e0e0e" stroke="#fff" stroke-width="0.22"/>
<path transform="translate(799.2 806.7) rotate(150)" d="M0 -14.2 Q3.8 -10.7 0 -7 Q-3.8 -10.7 0 -14.2 Z" fill="#0e0e0e" stroke="#fff" stroke-width="0.22"/>
<path transform="translate(799.2 806.7) rotate(170)" d="M0 -14.2 Q3.8 -10.7 0 -7 Q-3.8 -10.7 0 -14.2 Z" fill="#0e0e0e" stroke="#fff" stroke-width="0.22"/>
<path transform="translate(799.2 806.7) rotate(190)" d="M0 -14.2 Q3.8 -10.7 0 -7 Q-3.8 -10.7 0 -14.2 Z" fill="#0e0e0e" stroke="#fff" stroke-width="0.22"/>
<path transform="translate(799.2 806.7) rotate(210)" d="M0 -14.2 Q3.8 -10.7 0 -7 Q-3.8 -10.7 0 -14.2 Z" fill="#0e0e0e" stroke="#fff" stroke-width="0.22"/>
<path transform="translate(799.2 806.7) rotate(230)" d="M0 -14.2 Q3.8 -10.7 0 -7 Q-3.8 -10.7 0 -14.2 Z" fill="#0e0e0e" stroke="#fff" stroke-width="0.22"/>
<path transform="translate(799.2 806.7) rotate(250)" d="M0 -14.2 Q3.8 -10.7 0 -7 Q-3.8 -10.7 0 -14.2 Z" fill="#0e0e0e" stroke="#fff" stroke-width="0.22"/>
<path transform="translate(799.2 806.7) rotate(270)" d="M0 -14.2 Q3.8 -10.7 0 -7 Q-3.8 -10.7 0 -14.2 Z" fill="#0e0e0e" stroke="#fff" stroke-width="0.22"/>
<path transform="translate(799.2 806.7) rotate(290)" d="M0 -14.2 Q3.8 -10.7 0 -7 Q-3.8 -10.7 0 -14.2 Z" fill="#0e0e0e" stroke="#fff" stroke-width="0.22"/>
<path transform="translate(799.2 806.7) rotate(310)" d="M0 -14.2 Q3.8 -10.7 0 -7 Q-3.8 -10.7 0 -14.2 Z" fill="#0e0e0e" stroke="#fff" stroke-width="0.22"/>
<path transform="translate(799.2 806.7) rotate(330)" d="M0 -14.2 Q3.8 -10.7 0 -7 Q-3.8 -10.7 0 -14.2 Z" fill="#0e0e0e" stroke="#fff" stroke-width="0.22"/>
<path transform="translate(799.2 806.7) rotate(350)" d="M0 -14.2 Q3.8 -10.7 0 -7 Q-3.8 -10.7 0 -14.2 Z" fill="#0e0e0e" stroke="#fff" stroke-width="0.22"/>
<path transform="translate(799.2 806.7) rotate(0)" d="M0 -10.8 Q3 -8 0 -5 Q-3 -8 0 -10.8 Z" fill="#0e0e0e" stroke="#fff" stroke-width="0.22"/>
<path transform="translate(799.2 806.7) rotate(20)" d="M0 -10.8 Q3 -8 0 -5 Q-3 -8 0 -10.8 Z" fill="#0e0e0e" stroke="#fff" stroke-width="0.22"/>
<path transform="translate(799.2 806.7) rotate(40)" d="M0 -10.8 Q3 -8 0 -5 Q-3 -8 0 -10.8 Z" fill="#0e0e0e" stroke="#fff" stroke-width="0.22"/>
<path transform="translate(799.2 806.7) rotate(60)" d="M0 -10.8 Q3 -8 0 -5 Q-3 -8 0 -10.8 Z" fill="#0e0e0e" stroke="#fff" stroke-width="0.22"/>
<path transform="translate(799.2 806.7) rotate(80)" d="M0 -10.8 Q3 -8 0 -5 Q-3 -8 0 -10.8 Z" fill="#0e0e0e" stroke="#fff" stroke-width="0.22"/>
<path transform="translate(799.2 806.7) rotate(100)" d="M0 -10.8 Q3 -8 0 -5 Q-3 -8 0 -10.8 Z" fill="#0e0e0e" stroke="#fff" stroke-width="0.22"/>
<path transform="translate(799.2 806.7) rotate(120)" d="M0 -10.8 Q3 -8 0 -5 Q-3 -8 0 -10.8 Z" fill="#0e0e0e" stroke="#fff" stroke-width="0.22"/>
<path transform="translate(799.2 806.7) rotate(140)" d="M0 -10.8 Q3 -8 0 -5 Q-3 -8 0 -10.8 Z" fill="#0e0e0e" stroke="#fff" stroke-width="0.22"/>
<path transform="translate(799.2 806.7) rotate(160)" d="M0 -10.8 Q3 -8 0 -5 Q-3 -8 0 -10.8 Z" fill="#0e0e0e" stroke="#fff" stroke-width="0.22"/>
<path transform="translate(799.2 806.7) rotate(180)" d="M0 -10.8 Q3 -8 0 -5 Q-3 -8 0 -10.8 Z" fill="#0e0e0e" stroke="#fff" stroke-width="0.22"/>
<path transform="translate(799.2 806.7) rotate(200)" d="M0 -10.8 Q3 -8 0 -5 Q-3 -8 0 -10.8 Z" fill="#0e0e0e" stroke="#fff" stroke-width="0.22"/>
<path transform="translate(799.2 806.7) rotate(220)" d="M0 -10.8 Q3 -8 0 -5 Q-3 -8 0 -10.8 Z" fill="#0e0e0e" stroke="#fff" stroke-width="0.22"/>
<path transform="translate(799.2 806.7) rotate(240)" d="M0 -10.8 Q3 -8 0 -5 Q-3 -8 0 -10.8 Z" fill="#0e0e0e" stroke="#fff" stroke-width="0.22"/>
<path transform="translate(799.2 806.7) rotate(260)" d="M0 -10.8 Q3 -8 0 -5 Q-3 -8 0 -10.8 Z" fill="#0e0e0e" stroke="#fff" stroke-width="0.22"/>
<path transform="translate(799.2 806.7) rotate(280)" d="M0 -10.8 Q3 -8 0 -5 Q-3 -8 0 -10.8 Z" fill="#0e0e0e" stroke="#fff" stroke-width="0.22"/>
<path transform="translate(799.2 806.7) rotate(300)" d="M0 -10.8 Q3 -8 0 -5 Q-3 -8 0 -10.8 Z" fill="#0e0e0e" stroke="#fff" stroke-width="0.22"/>
<path transform="translate(799.2 806.7) rotate(320)" d="M0 -10.8 Q3 -8 0 -5 Q-3 -8 0 -10.8 Z" fill="#0e0e0e" stroke="#fff" stroke-width="0.22"/>
<path transform="translate(799.2 806.7) rotate(340)" d="M0 -10.8 Q3 -8 0 -5 Q-3 -8 0 -10.8 Z" fill="#0e0e0e" stroke="#fff" stroke-width="0.22"/>
<circle cx="799.2" cy="806.7" r="5.5" fill="#fff" stroke="#fff" stroke-width="0.1"/>
<text x="820.7" y="811.7" font-size="18" fill="#1b1b1b" stroke="none" style="stroke:none" textLength="19" lengthAdjust="spacingAndGlyphs">bp</text>
<text x="779.2" y="841.5" font-size="7.79" textLength="71.9" lengthAdjust="spacingAndGlyphs" fill="#1e1e1e">REGISTRATION  CODES</text>
<text x="775.7" y="849.8" font-size="5.19" textLength="10.5" lengthAdjust="spacingAndGlyphs" fill="#1e1e1e" font-weight="bold">Area</text>
<text x="811.1" y="849.8" font-size="5.19" textLength="17.5" lengthAdjust="spacingAndGlyphs" fill="#1e1e1e" font-weight="bold">System</text>
<text x="846.1" y="849.8" font-size="5.19" textLength="11.2" lengthAdjust="spacingAndGlyphs" fill="#1e1e1e" font-weight="bold">Type</text>
<line x1="800.7" y1="845.5" x2="800.7" y2="850.5" stroke="#2e2e2e" stroke-width="0.96"/>
<line x1="839.4" y1="845.5" x2="839.4" y2="850.5" stroke="#2e2e2e" stroke-width="0.96"/>
<line x1="800.7" y1="867.5" x2="800.7" y2="871.5" stroke="#2e2e2e" stroke-width="0.96"/>
<line x1="839.4" y1="867.5" x2="839.4" y2="871.5" stroke="#2e2e2e" stroke-width="0.96"/>
<text x="777.4" y="869" font-size="10" textLength="21.3" lengthAdjust="spacingAndGlyphs" fill="#1e1e1e" style="stroke-width:.1px">P400</text>
<text x="814.9" y="869" font-size="10" textLength="10.7" lengthAdjust="spacingAndGlyphs" fill="#1e1e1e" style="stroke-width:.1px">23</text>
<text x="848.6" y="869" font-size="10" textLength="9.5" lengthAdjust="spacingAndGlyphs" fill="#1e1e1e" style="stroke-width:.1px">A1</text>
<line x1="868.3" y1="790" x2="872.3" y2="790" stroke="#2e2e2e" stroke-width="1.08"/>
<text x="867.3" y="804.3" font-size="10" textLength="63.7" lengthAdjust="spacingAndGlyphs" fill="#1e1e1e" style="stroke-width:.1px">PROCESS  P&amp;ID</text>
<text x="867.3" y="815.3" font-size="10" textLength="119.9" lengthAdjust="spacingAndGlyphs" fill="#1e1e1e" style="stroke-width:.1px">3RD  STAGE  RECOMPRESSOR</text>
<text x="868" y="824.3" font-size="10" textLength="44.3" lengthAdjust="spacingAndGlyphs" fill="#1e1e1e" style="stroke-width:.1px">-  TRAIN  1</text>
<text x="916" y="841.5" font-size="7.79" textLength="41.7" lengthAdjust="spacingAndGlyphs" fill="#1e1e1e">DRAWING  NO</text>
<text x="872.3" y="849.8" font-size="5.19" textLength="17" lengthAdjust="spacingAndGlyphs" fill="#1e1e1e" font-weight="bold">Facility</text>
<text x="905.5" y="849.8" font-size="5.19" textLength="9.3" lengthAdjust="spacingAndGlyphs" fill="#1e1e1e" font-weight="bold">Orig</text>
<text x="926" y="849.8" font-size="5.19" textLength="9.2" lengthAdjust="spacingAndGlyphs" fill="#1e1e1e" font-weight="bold">Disc</text>
<text x="940.8" y="849.8" font-size="5.19" textLength="8.7" lengthAdjust="spacingAndGlyphs" fill="#1e1e1e" font-weight="bold">Doc</text>
<text x="953" y="849.8" font-size="5.19" textLength="10.5" lengthAdjust="spacingAndGlyphs" fill="#1e1e1e" font-weight="bold">type</text>
<text x="968" y="849.8" font-size="5.19" textLength="8" lengthAdjust="spacingAndGlyphs" fill="#1e1e1e" font-weight="bold">Seq</text>
<text x="980.5" y="849.8" font-size="5.19" textLength="5" lengthAdjust="spacingAndGlyphs" fill="#1e1e1e" font-weight="bold">No</text>
<text x="994.2" y="849.8" font-size="5.19" textLength="12.9" lengthAdjust="spacingAndGlyphs" fill="#1e1e1e" font-weight="bold">Sheet</text>
<line x1="898.5" y1="845.5" x2="898.5" y2="850.5" stroke="#2e2e2e" stroke-width="0.96"/>
<line x1="923" y1="845.5" x2="923" y2="850.5" stroke="#2e2e2e" stroke-width="0.96"/>
<line x1="939.2" y1="845.5" x2="939.2" y2="850.5" stroke="#2e2e2e" stroke-width="0.96"/>
<line x1="964.7" y1="845.5" x2="964.7" y2="850.5" stroke="#2e2e2e" stroke-width="0.96"/>
<line x1="989.7" y1="845.5" x2="989.7" y2="850.5" stroke="#2e2e2e" stroke-width="0.96"/>
<rect x="871.1" y="859.1" width="138.6" height="12" rx="2.5" fill="#e8894a" fill-opacity="0.06" stroke="#df8843" stroke-width="1.6"/>
<text x="873.6" y="869.1" font-size="10" textLength="16.2" lengthAdjust="spacingAndGlyphs" fill="#1e1e1e" style="stroke-width:.1px">SKA</text>
<text x="904" y="869.1" font-size="10" textLength="10.8" lengthAdjust="spacingAndGlyphs" fill="#1e1e1e" style="stroke-width:.1px">AK</text>
<text x="928.5" y="869.1" font-size="10" textLength="5.7" lengthAdjust="spacingAndGlyphs" fill="#1e1e1e" style="stroke-width:.1px">P</text>
<text x="943.5" y="869.1" font-size="10" textLength="10.5" lengthAdjust="spacingAndGlyphs" fill="#1e1e1e" style="stroke-width:.1px">XB</text>
<text x="967.2" y="869.1" font-size="10" textLength="20.7" lengthAdjust="spacingAndGlyphs" fill="#1e1e1e" style="stroke-width:.1px">2355</text>
<text x="994.2" y="869.1" font-size="10" textLength="13.7" lengthAdjust="spacingAndGlyphs" fill="#1e1e1e" style="stroke-width:.1px">001</text>
<polyline points="900.7,865.5 898.5,865.5 898.5,870.5" fill="none" stroke="#444444" stroke-width="1.0" stroke-linejoin="miter"/>
<polyline points="925.2,865.5 923,865.5 923,870.5" fill="none" stroke="#444444" stroke-width="1.0" stroke-linejoin="miter"/>
<polyline points="941.4,865.5 939.2,865.5 939.2,870.5" fill="none" stroke="#444444" stroke-width="1.0" stroke-linejoin="miter"/>
<polyline points="966.9,865.5 964.7,865.5 964.7,870.5" fill="none" stroke="#444444" stroke-width="1.0" stroke-linejoin="miter"/>
<polyline points="991.9,865.5 989.7,865.5 989.7,870.5" fill="none" stroke="#444444" stroke-width="1.0" stroke-linejoin="miter"/>
<text x="1024.1" y="838.8" font-size="5.19" textLength="11.3" lengthAdjust="spacingAndGlyphs" fill="#1e1e1e" font-weight="bold">Scale</text>
<text x="1024.1" y="849.9" font-size="9.2" textLength="11" lengthAdjust="spacingAndGlyphs" fill="#1e1e1e" style="stroke-width:.1px">NA</text>
<text x="1025.1" y="858.2" font-size="5.19" textLength="8.3" lengthAdjust="spacingAndGlyphs" fill="#1e1e1e" font-weight="bold">Rev</text>
<text x="1022.9" y="868.7" font-size="9.2" textLength="13.7" lengthAdjust="spacingAndGlyphs" fill="#1e1e1e" style="stroke-width:.1px">Z14</text>
<line x1="1048.6" y1="13" x2="1048.6" y2="872.4" stroke="#222" stroke-width="1.7"/>
<line x1="1025" y1="35.6" x2="1319" y2="35.6" stroke="#f2b891" stroke-width="1.0"/>
<line x1="1025" y1="67.2" x2="1319" y2="67.2" stroke="#f2b891" stroke-width="1.0"/>
<line x1="1025" y1="98.7" x2="1319" y2="98.7" stroke="#f2b891" stroke-width="1.0"/>
<line x1="1025" y1="252.3" x2="1319" y2="252.3" stroke="#f2b891" stroke-width="1.0"/>
<line x1="1318.3" y1="13" x2="1318.3" y2="912" stroke="#f2b891" stroke-width="1.2"/>
<line x1="940.2" y1="872.6" x2="940.2" y2="970" stroke="#f2b891" stroke-width="1.0"/>
<line x1="1051.6" y1="434.6" x2="1318" y2="434.6" stroke="#e58f55" stroke-width="1.8"/>
<line x1="1051.6" y1="443.7" x2="1316" y2="443.7" stroke="#e58f55" stroke-width="1.8"/>
<line x1="1052.4" y1="434.6" x2="1052.4" y2="443.7" stroke="#e58f55" stroke-width="1.8"/>
<line x1="1079.2" y1="13" x2="1079.2" y2="904" stroke="#5f5fd8" stroke-width="2.2"/>
<line x1="83" y1="903.8" x2="1079.2" y2="903.8" stroke="#5f5fd8" stroke-width="2.2"/>
<circle cx="1079.2" cy="904" r="5.4" fill="#fff" stroke="#c9c9dc" stroke-width="1.6"/>
  </svg>
  <div id="toolbar"></div>
  <div id="toolsel"></div>
  <svg style="position:absolute;left:0;top:433px" width="31" height="530" viewBox="53 446 31 530" fill="none" stroke="#3a3a3a" stroke-width="1.6">
<polyline points="52.8,473.3 60.6,476.4 54.5,479.6 59.8,484.2" stroke="#fff" stroke-width="2" stroke-linejoin="miter"/>
<path d="M52 517.6q1.8 -1.3 3.3 0q1.9 1.2 3.9 -0.3q1.4 -0.4 1.3 1.2l-1.2 11.2q-0.3 1.7 -2.2 1.8H52M55.2 523v6"/>
<path d="M53 554.4H62.7M53 894.3H61.6" stroke="#dddddd" stroke-width="1"/>
<path d="M52 578.9H60V581.6M54.5 578.9V591.2"/>
<rect x="49" y="624.6" width="11.3" height="13.3" rx="1.6"/>
<path d="M52.6 670.4L56.6 678.2H52"/><circle cx="56.8" cy="681.5" r="2.6"/>
<path d="M52 725.4L57.2 720.4"/><circle cx="58.3" cy="719" r="1.7" stroke-width="1.4"/>
<circle cx="58.3" cy="765.2" r="1.7" stroke-width="1.4"/><path d="M58.3 767V774.3"/><circle cx="58.3" cy="776.1" r="1.7" stroke-width="1.4"/>
<rect x="49" y="811.5" width="11.2" height="9.5" rx="2.2"/>
<path d="M52 857.6q3.6 -3.4 4.6 0.6q0.1 2.2 -0.8 3.6q-0.7 2.6 2.3 3q2.8 0.2 2.7 2.6H52M52 870.5H61.6"/>
<path d="M52 917.8H59.3V925.5H52M52 931H60M57.6 928.5L60.1 931L57.6 933.5" stroke-width="1.5"/>
<circle cx="57.5" cy="966.6" r="2.6"/>
  </svg>
</div>

<div id="pop">
  <svg style="position:absolute;left:19px;top:32px" width="20" height="18" viewBox="0 0 20 18"><polygon points="2.55,8.9 6.2,2.7 13.6,2.7 17.25,8.9 13.6,15.1 6.2,15.1" fill="none" stroke="#8aa9ea" stroke-width="1.9" stroke-linejoin="round"/></svg>
  <div class="ttl">23-PI-1012B</div>
  <div class="btn" style="left:271px;top:20px;width:41px;height:41px;">
    <svg width="41" height="41" viewBox="0 0 41 41"><path d="M15.5 20.5H25.5M20.5 15.5V25.5" stroke="#fff" stroke-width="1.8" fill="none"/></svg>
  </div>
  <div class="btn" style="left:317px;top:20px;width:42px;height:41px;">
    <svg width="42" height="41" viewBox="0 0 42 41"><circle cx="15" cy="20.5" r="1.6" fill="#fff"/><circle cx="21" cy="20.5" r="1.6" fill="#fff"/><circle cx="27" cy="20.5" r="1.6" fill="#fff"/></svg>
  </div>
  <div class="asset">ASSET</div>
  <div class="ts">Time series</div>
  <div class="badge">1</div>
  <svg style="position:absolute;left:326px;top:111px" width="18" height="16" viewBox="742 488 18 16" fill="none" stroke="#f0f0f0" stroke-width="1.55" stroke-linecap="round"><path d="M743.4 490.9H758.6M743.4 495.9H747.6M743.4 500.2H747.6"/><circle cx="752.9" cy="498" r="2.9"/><path d="M755.2 500.3L758.3 502.9"/></svg>
  <div class="ico"><svg width="28" height="28" viewBox="0 0 28 28" fill="none" stroke="#f0f0f0" stroke-width="1.6" stroke-linecap="round" stroke-linejoin="round"><path d="M6.3 6.4V19.6Q6.3 21 7.7 21H21.4"/><path d="M10 16.2L14 12.3L16.1 14.5L20.3 10.6"/><path d="M17.5 10.3H20.7V13.5"/></svg></div>
  <div class="tsn">SKAP_23PI1012B/Y/PRIM</div>
  <svg style="position:absolute;left:292px;top:151px" width="20" height="20" viewBox="708 528 20 20" fill="none" stroke="#f0f0f0" stroke-width="1.5" stroke-linejoin="round" stroke-linecap="round"><path d="M721.9 531.4L725.9 535.4L723.6 538L720.9 543L714 537.2L719.3 534.2Z"/><path d="M716.9 540.6L712.8 544.6"/></svg>
  <div class="btn" style="left:327px;top:145px;width:31.7px;height:31.8px;border-radius:4.5px;">
    <svg width="32" height="32" viewBox="0 0 32 32"><path d="M10.3 15.9H20.7M15.5 10.7V21.1" stroke="#fff" stroke-width="1.9" fill="none"/></svg>
  </div>
</div>

<div id="menu">
  <div style="top:12.6px">Add timeseries to new chart</div>
  <div style="top:44px">Add timeseries to existing chart</div>
</div>
</body>
</html>
